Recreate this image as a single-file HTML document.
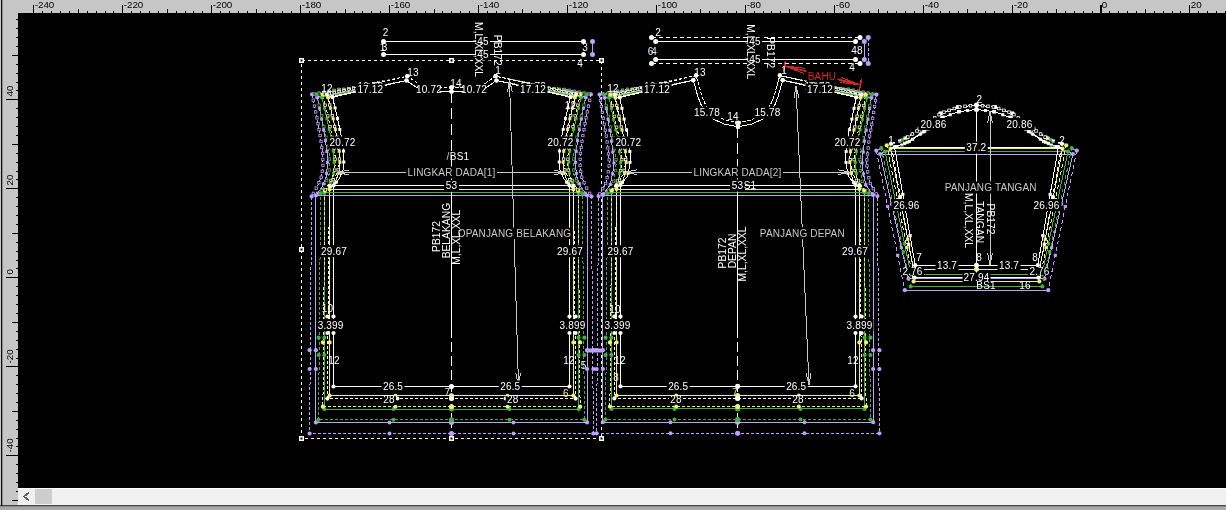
<!DOCTYPE html>
<html><head><meta charset="utf-8"><style>
html,body{margin:0;padding:0;width:1226px;height:510px;overflow:hidden;background:#c6c6c6}
svg{display:block;will-change:transform} path,line{shape-rendering:crispEdges}
</style></head><body>
<svg width="1226" height="510" viewBox="0 0 1226 510">
<rect x="0" y="0" width="1226" height="510" fill="#c6c6c6"/>
<rect x="18" y="13" width="1208" height="475" fill="#000"/>
<line x1="33.5" y1="5" x2="33.5" y2="13" stroke="#000" stroke-width="1"/>
<text x="34.7" y="4.6" fill="#000" font-size="9.8" text-anchor="start" dominant-baseline="central" font-family="Liberation Sans, sans-serif">-240</text>
<line x1="42.5" y1="10.5" x2="42.5" y2="13" stroke="#000" stroke-width="1"/>
<line x1="51.5" y1="10.5" x2="51.5" y2="13" stroke="#000" stroke-width="1"/>
<line x1="60.5" y1="10.5" x2="60.5" y2="13" stroke="#000" stroke-width="1"/>
<line x1="69.5" y1="10.5" x2="69.5" y2="13" stroke="#000" stroke-width="1"/>
<line x1="78.5" y1="8.5" x2="78.5" y2="13" stroke="#000" stroke-width="1"/>
<line x1="87.5" y1="10.5" x2="87.5" y2="13" stroke="#000" stroke-width="1"/>
<line x1="96.5" y1="10.5" x2="96.5" y2="13" stroke="#000" stroke-width="1"/>
<line x1="105.5" y1="10.5" x2="105.5" y2="13" stroke="#000" stroke-width="1"/>
<line x1="113.5" y1="10.5" x2="113.5" y2="13" stroke="#000" stroke-width="1"/>
<line x1="122.5" y1="5" x2="122.5" y2="13" stroke="#000" stroke-width="1"/>
<text x="123.7" y="4.6" fill="#000" font-size="9.8" text-anchor="start" dominant-baseline="central" font-family="Liberation Sans, sans-serif">-220</text>
<line x1="131.5" y1="10.5" x2="131.5" y2="13" stroke="#000" stroke-width="1"/>
<line x1="140.5" y1="10.5" x2="140.5" y2="13" stroke="#000" stroke-width="1"/>
<line x1="149.5" y1="10.5" x2="149.5" y2="13" stroke="#000" stroke-width="1"/>
<line x1="158.5" y1="10.5" x2="158.5" y2="13" stroke="#000" stroke-width="1"/>
<line x1="167.5" y1="8.5" x2="167.5" y2="13" stroke="#000" stroke-width="1"/>
<line x1="176.5" y1="10.5" x2="176.5" y2="13" stroke="#000" stroke-width="1"/>
<line x1="185.5" y1="10.5" x2="185.5" y2="13" stroke="#000" stroke-width="1"/>
<line x1="193.5" y1="10.5" x2="193.5" y2="13" stroke="#000" stroke-width="1"/>
<line x1="202.5" y1="10.5" x2="202.5" y2="13" stroke="#000" stroke-width="1"/>
<line x1="211.5" y1="5" x2="211.5" y2="13" stroke="#000" stroke-width="1"/>
<text x="212.7" y="4.6" fill="#000" font-size="9.8" text-anchor="start" dominant-baseline="central" font-family="Liberation Sans, sans-serif">-200</text>
<line x1="220.5" y1="10.5" x2="220.5" y2="13" stroke="#000" stroke-width="1"/>
<line x1="229.5" y1="10.5" x2="229.5" y2="13" stroke="#000" stroke-width="1"/>
<line x1="238.5" y1="10.5" x2="238.5" y2="13" stroke="#000" stroke-width="1"/>
<line x1="247.5" y1="10.5" x2="247.5" y2="13" stroke="#000" stroke-width="1"/>
<line x1="256.5" y1="8.5" x2="256.5" y2="13" stroke="#000" stroke-width="1"/>
<line x1="265.5" y1="10.5" x2="265.5" y2="13" stroke="#000" stroke-width="1"/>
<line x1="273.5" y1="10.5" x2="273.5" y2="13" stroke="#000" stroke-width="1"/>
<line x1="282.5" y1="10.5" x2="282.5" y2="13" stroke="#000" stroke-width="1"/>
<line x1="291.5" y1="10.5" x2="291.5" y2="13" stroke="#000" stroke-width="1"/>
<line x1="300.5" y1="5" x2="300.5" y2="13" stroke="#000" stroke-width="1"/>
<text x="301.7" y="4.6" fill="#000" font-size="9.8" text-anchor="start" dominant-baseline="central" font-family="Liberation Sans, sans-serif">-180</text>
<line x1="309.5" y1="10.5" x2="309.5" y2="13" stroke="#000" stroke-width="1"/>
<line x1="318.5" y1="10.5" x2="318.5" y2="13" stroke="#000" stroke-width="1"/>
<line x1="327.5" y1="10.5" x2="327.5" y2="13" stroke="#000" stroke-width="1"/>
<line x1="336.5" y1="10.5" x2="336.5" y2="13" stroke="#000" stroke-width="1"/>
<line x1="345.5" y1="8.5" x2="345.5" y2="13" stroke="#000" stroke-width="1"/>
<line x1="354.5" y1="10.5" x2="354.5" y2="13" stroke="#000" stroke-width="1"/>
<line x1="362.5" y1="10.5" x2="362.5" y2="13" stroke="#000" stroke-width="1"/>
<line x1="371.5" y1="10.5" x2="371.5" y2="13" stroke="#000" stroke-width="1"/>
<line x1="380.5" y1="10.5" x2="380.5" y2="13" stroke="#000" stroke-width="1"/>
<line x1="389.5" y1="5" x2="389.5" y2="13" stroke="#000" stroke-width="1"/>
<text x="390.7" y="4.6" fill="#000" font-size="9.8" text-anchor="start" dominant-baseline="central" font-family="Liberation Sans, sans-serif">-160</text>
<line x1="398.5" y1="10.5" x2="398.5" y2="13" stroke="#000" stroke-width="1"/>
<line x1="407.5" y1="10.5" x2="407.5" y2="13" stroke="#000" stroke-width="1"/>
<line x1="416.5" y1="10.5" x2="416.5" y2="13" stroke="#000" stroke-width="1"/>
<line x1="425.5" y1="10.5" x2="425.5" y2="13" stroke="#000" stroke-width="1"/>
<line x1="434.5" y1="8.5" x2="434.5" y2="13" stroke="#000" stroke-width="1"/>
<line x1="442.5" y1="10.5" x2="442.5" y2="13" stroke="#000" stroke-width="1"/>
<line x1="451.5" y1="10.5" x2="451.5" y2="13" stroke="#000" stroke-width="1"/>
<line x1="460.5" y1="10.5" x2="460.5" y2="13" stroke="#000" stroke-width="1"/>
<line x1="469.5" y1="10.5" x2="469.5" y2="13" stroke="#000" stroke-width="1"/>
<line x1="478.5" y1="5" x2="478.5" y2="13" stroke="#000" stroke-width="1"/>
<text x="479.7" y="4.6" fill="#000" font-size="9.8" text-anchor="start" dominant-baseline="central" font-family="Liberation Sans, sans-serif">-140</text>
<line x1="487.5" y1="10.5" x2="487.5" y2="13" stroke="#000" stroke-width="1"/>
<line x1="496.5" y1="10.5" x2="496.5" y2="13" stroke="#000" stroke-width="1"/>
<line x1="505.5" y1="10.5" x2="505.5" y2="13" stroke="#000" stroke-width="1"/>
<line x1="514.5" y1="10.5" x2="514.5" y2="13" stroke="#000" stroke-width="1"/>
<line x1="522.5" y1="8.5" x2="522.5" y2="13" stroke="#000" stroke-width="1"/>
<line x1="531.5" y1="10.5" x2="531.5" y2="13" stroke="#000" stroke-width="1"/>
<line x1="540.5" y1="10.5" x2="540.5" y2="13" stroke="#000" stroke-width="1"/>
<line x1="549.5" y1="10.5" x2="549.5" y2="13" stroke="#000" stroke-width="1"/>
<line x1="558.5" y1="10.5" x2="558.5" y2="13" stroke="#000" stroke-width="1"/>
<line x1="567.5" y1="5" x2="567.5" y2="13" stroke="#000" stroke-width="1"/>
<text x="568.7" y="4.6" fill="#000" font-size="9.8" text-anchor="start" dominant-baseline="central" font-family="Liberation Sans, sans-serif">-120</text>
<line x1="576.5" y1="10.5" x2="576.5" y2="13" stroke="#000" stroke-width="1"/>
<line x1="585.5" y1="10.5" x2="585.5" y2="13" stroke="#000" stroke-width="1"/>
<line x1="594.5" y1="10.5" x2="594.5" y2="13" stroke="#000" stroke-width="1"/>
<line x1="602.5" y1="10.5" x2="602.5" y2="13" stroke="#000" stroke-width="1"/>
<line x1="611.5" y1="8.5" x2="611.5" y2="13" stroke="#000" stroke-width="1"/>
<line x1="620.5" y1="10.5" x2="620.5" y2="13" stroke="#000" stroke-width="1"/>
<line x1="629.5" y1="10.5" x2="629.5" y2="13" stroke="#000" stroke-width="1"/>
<line x1="638.5" y1="10.5" x2="638.5" y2="13" stroke="#000" stroke-width="1"/>
<line x1="647.5" y1="10.5" x2="647.5" y2="13" stroke="#000" stroke-width="1"/>
<line x1="656.5" y1="5" x2="656.5" y2="13" stroke="#000" stroke-width="1"/>
<text x="657.7" y="4.6" fill="#000" font-size="9.8" text-anchor="start" dominant-baseline="central" font-family="Liberation Sans, sans-serif">-100</text>
<line x1="665.5" y1="10.5" x2="665.5" y2="13" stroke="#000" stroke-width="1"/>
<line x1="674.5" y1="10.5" x2="674.5" y2="13" stroke="#000" stroke-width="1"/>
<line x1="683.5" y1="10.5" x2="683.5" y2="13" stroke="#000" stroke-width="1"/>
<line x1="691.5" y1="10.5" x2="691.5" y2="13" stroke="#000" stroke-width="1"/>
<line x1="700.5" y1="8.5" x2="700.5" y2="13" stroke="#000" stroke-width="1"/>
<line x1="709.5" y1="10.5" x2="709.5" y2="13" stroke="#000" stroke-width="1"/>
<line x1="718.5" y1="10.5" x2="718.5" y2="13" stroke="#000" stroke-width="1"/>
<line x1="727.5" y1="10.5" x2="727.5" y2="13" stroke="#000" stroke-width="1"/>
<line x1="736.5" y1="10.5" x2="736.5" y2="13" stroke="#000" stroke-width="1"/>
<line x1="745.5" y1="5" x2="745.5" y2="13" stroke="#000" stroke-width="1"/>
<text x="746.7" y="4.6" fill="#000" font-size="9.8" text-anchor="start" dominant-baseline="central" font-family="Liberation Sans, sans-serif">-80</text>
<line x1="754.5" y1="10.5" x2="754.5" y2="13" stroke="#000" stroke-width="1"/>
<line x1="763.5" y1="10.5" x2="763.5" y2="13" stroke="#000" stroke-width="1"/>
<line x1="771.5" y1="10.5" x2="771.5" y2="13" stroke="#000" stroke-width="1"/>
<line x1="780.5" y1="10.5" x2="780.5" y2="13" stroke="#000" stroke-width="1"/>
<line x1="789.5" y1="8.5" x2="789.5" y2="13" stroke="#000" stroke-width="1"/>
<line x1="798.5" y1="10.5" x2="798.5" y2="13" stroke="#000" stroke-width="1"/>
<line x1="807.5" y1="10.5" x2="807.5" y2="13" stroke="#000" stroke-width="1"/>
<line x1="816.5" y1="10.5" x2="816.5" y2="13" stroke="#000" stroke-width="1"/>
<line x1="825.5" y1="10.5" x2="825.5" y2="13" stroke="#000" stroke-width="1"/>
<line x1="834.5" y1="5" x2="834.5" y2="13" stroke="#000" stroke-width="1"/>
<text x="835.7" y="4.6" fill="#000" font-size="9.8" text-anchor="start" dominant-baseline="central" font-family="Liberation Sans, sans-serif">-60</text>
<line x1="843.5" y1="10.5" x2="843.5" y2="13" stroke="#000" stroke-width="1"/>
<line x1="851.5" y1="10.5" x2="851.5" y2="13" stroke="#000" stroke-width="1"/>
<line x1="860.5" y1="10.5" x2="860.5" y2="13" stroke="#000" stroke-width="1"/>
<line x1="869.5" y1="10.5" x2="869.5" y2="13" stroke="#000" stroke-width="1"/>
<line x1="878.5" y1="8.5" x2="878.5" y2="13" stroke="#000" stroke-width="1"/>
<line x1="887.5" y1="10.5" x2="887.5" y2="13" stroke="#000" stroke-width="1"/>
<line x1="896.5" y1="10.5" x2="896.5" y2="13" stroke="#000" stroke-width="1"/>
<line x1="905.5" y1="10.5" x2="905.5" y2="13" stroke="#000" stroke-width="1"/>
<line x1="914.5" y1="10.5" x2="914.5" y2="13" stroke="#000" stroke-width="1"/>
<line x1="923.5" y1="5" x2="923.5" y2="13" stroke="#000" stroke-width="1"/>
<text x="924.7" y="4.6" fill="#000" font-size="9.8" text-anchor="start" dominant-baseline="central" font-family="Liberation Sans, sans-serif">-40</text>
<line x1="931.5" y1="10.5" x2="931.5" y2="13" stroke="#000" stroke-width="1"/>
<line x1="940.5" y1="10.5" x2="940.5" y2="13" stroke="#000" stroke-width="1"/>
<line x1="949.5" y1="10.5" x2="949.5" y2="13" stroke="#000" stroke-width="1"/>
<line x1="958.5" y1="10.5" x2="958.5" y2="13" stroke="#000" stroke-width="1"/>
<line x1="967.5" y1="8.5" x2="967.5" y2="13" stroke="#000" stroke-width="1"/>
<line x1="976.5" y1="10.5" x2="976.5" y2="13" stroke="#000" stroke-width="1"/>
<line x1="985.5" y1="10.5" x2="985.5" y2="13" stroke="#000" stroke-width="1"/>
<line x1="994.5" y1="10.5" x2="994.5" y2="13" stroke="#000" stroke-width="1"/>
<line x1="1003.5" y1="10.5" x2="1003.5" y2="13" stroke="#000" stroke-width="1"/>
<line x1="1012.5" y1="5" x2="1012.5" y2="13" stroke="#000" stroke-width="1"/>
<text x="1013.7" y="4.6" fill="#000" font-size="9.8" text-anchor="start" dominant-baseline="central" font-family="Liberation Sans, sans-serif">-20</text>
<line x1="1020.5" y1="10.5" x2="1020.5" y2="13" stroke="#000" stroke-width="1"/>
<line x1="1029.5" y1="10.5" x2="1029.5" y2="13" stroke="#000" stroke-width="1"/>
<line x1="1038.5" y1="10.5" x2="1038.5" y2="13" stroke="#000" stroke-width="1"/>
<line x1="1047.5" y1="10.5" x2="1047.5" y2="13" stroke="#000" stroke-width="1"/>
<line x1="1056.5" y1="8.5" x2="1056.5" y2="13" stroke="#000" stroke-width="1"/>
<line x1="1065.5" y1="10.5" x2="1065.5" y2="13" stroke="#000" stroke-width="1"/>
<line x1="1074.5" y1="10.5" x2="1074.5" y2="13" stroke="#000" stroke-width="1"/>
<line x1="1083.5" y1="10.5" x2="1083.5" y2="13" stroke="#000" stroke-width="1"/>
<line x1="1092.5" y1="10.5" x2="1092.5" y2="13" stroke="#000" stroke-width="1"/>
<line x1="1100.5" y1="5" x2="1100.5" y2="13" stroke="#000" stroke-width="1"/>
<text x="1101.7" y="4.6" fill="#000" font-size="9.8" text-anchor="start" dominant-baseline="central" font-family="Liberation Sans, sans-serif">0</text>
<line x1="1101.5" y1="5" x2="1101.5" y2="13" stroke="#000" stroke-width="1"/>
<line x1="1109.5" y1="10.5" x2="1109.5" y2="13" stroke="#000" stroke-width="1"/>
<line x1="1118.5" y1="10.5" x2="1118.5" y2="13" stroke="#000" stroke-width="1"/>
<line x1="1127.5" y1="10.5" x2="1127.5" y2="13" stroke="#000" stroke-width="1"/>
<line x1="1136.5" y1="10.5" x2="1136.5" y2="13" stroke="#000" stroke-width="1"/>
<line x1="1145.5" y1="8.5" x2="1145.5" y2="13" stroke="#000" stroke-width="1"/>
<line x1="1154.5" y1="10.5" x2="1154.5" y2="13" stroke="#000" stroke-width="1"/>
<line x1="1163.5" y1="10.5" x2="1163.5" y2="13" stroke="#000" stroke-width="1"/>
<line x1="1172.5" y1="10.5" x2="1172.5" y2="13" stroke="#000" stroke-width="1"/>
<line x1="1180.5" y1="10.5" x2="1180.5" y2="13" stroke="#000" stroke-width="1"/>
<line x1="1189.5" y1="5" x2="1189.5" y2="13" stroke="#000" stroke-width="1"/>
<text x="1190.7" y="4.6" fill="#000" font-size="9.8" text-anchor="start" dominant-baseline="central" font-family="Liberation Sans, sans-serif">20</text>
<line x1="1198.5" y1="10.5" x2="1198.5" y2="13" stroke="#000" stroke-width="1"/>
<line x1="1207.5" y1="10.5" x2="1207.5" y2="13" stroke="#000" stroke-width="1"/>
<line x1="1216.5" y1="10.5" x2="1216.5" y2="13" stroke="#000" stroke-width="1"/>
<line x1="1225.5" y1="10.5" x2="1225.5" y2="13" stroke="#000" stroke-width="1"/>
<line x1="12" y1="500.5" x2="18" y2="500.5" stroke="#000" stroke-width="1"/>
<line x1="15.5" y1="491.5" x2="18" y2="491.5" stroke="#000" stroke-width="1"/>
<line x1="15.5" y1="482.5" x2="18" y2="482.5" stroke="#000" stroke-width="1"/>
<line x1="15.5" y1="473.5" x2="18" y2="473.5" stroke="#000" stroke-width="1"/>
<line x1="15.5" y1="464.5" x2="18" y2="464.5" stroke="#000" stroke-width="1"/>
<line x1="6" y1="455.5" x2="18" y2="455.5" stroke="#000" stroke-width="1"/>
<text x="12.8" y="452.5" fill="#000" font-size="9.8" text-anchor="start" font-family="Liberation Sans, sans-serif" transform="rotate(-90 12.8 452.5)">-40</text>
<line x1="15.5" y1="446.5" x2="18" y2="446.5" stroke="#000" stroke-width="1"/>
<line x1="15.5" y1="438.5" x2="18" y2="438.5" stroke="#000" stroke-width="1"/>
<line x1="15.5" y1="429.5" x2="18" y2="429.5" stroke="#000" stroke-width="1"/>
<line x1="15.5" y1="420.5" x2="18" y2="420.5" stroke="#000" stroke-width="1"/>
<line x1="12" y1="411.5" x2="18" y2="411.5" stroke="#000" stroke-width="1"/>
<line x1="15.5" y1="402.5" x2="18" y2="402.5" stroke="#000" stroke-width="1"/>
<line x1="15.5" y1="393.5" x2="18" y2="393.5" stroke="#000" stroke-width="1"/>
<line x1="15.5" y1="384.5" x2="18" y2="384.5" stroke="#000" stroke-width="1"/>
<line x1="15.5" y1="375.5" x2="18" y2="375.5" stroke="#000" stroke-width="1"/>
<line x1="6" y1="366.5" x2="18" y2="366.5" stroke="#000" stroke-width="1"/>
<text x="12.8" y="363.5" fill="#000" font-size="9.8" text-anchor="start" font-family="Liberation Sans, sans-serif" transform="rotate(-90 12.8 363.5)">-20</text>
<line x1="15.5" y1="358.5" x2="18" y2="358.5" stroke="#000" stroke-width="1"/>
<line x1="15.5" y1="349.5" x2="18" y2="349.5" stroke="#000" stroke-width="1"/>
<line x1="15.5" y1="340.5" x2="18" y2="340.5" stroke="#000" stroke-width="1"/>
<line x1="15.5" y1="331.5" x2="18" y2="331.5" stroke="#000" stroke-width="1"/>
<line x1="12" y1="322.5" x2="18" y2="322.5" stroke="#000" stroke-width="1"/>
<line x1="15.5" y1="313.5" x2="18" y2="313.5" stroke="#000" stroke-width="1"/>
<line x1="15.5" y1="304.5" x2="18" y2="304.5" stroke="#000" stroke-width="1"/>
<line x1="15.5" y1="295.5" x2="18" y2="295.5" stroke="#000" stroke-width="1"/>
<line x1="15.5" y1="286.5" x2="18" y2="286.5" stroke="#000" stroke-width="1"/>
<line x1="6" y1="277.5" x2="18" y2="277.5" stroke="#000" stroke-width="1"/>
<text x="12.8" y="274.5" fill="#000" font-size="9.8" text-anchor="start" font-family="Liberation Sans, sans-serif" transform="rotate(-90 12.8 274.5)">0</text>
<line x1="15.5" y1="268.5" x2="18" y2="268.5" stroke="#000" stroke-width="1"/>
<line x1="15.5" y1="260.5" x2="18" y2="260.5" stroke="#000" stroke-width="1"/>
<line x1="15.5" y1="251.5" x2="18" y2="251.5" stroke="#000" stroke-width="1"/>
<line x1="15.5" y1="242.5" x2="18" y2="242.5" stroke="#000" stroke-width="1"/>
<line x1="12" y1="233.5" x2="18" y2="233.5" stroke="#000" stroke-width="1"/>
<line x1="15.5" y1="224.5" x2="18" y2="224.5" stroke="#000" stroke-width="1"/>
<line x1="15.5" y1="215.5" x2="18" y2="215.5" stroke="#000" stroke-width="1"/>
<line x1="15.5" y1="206.5" x2="18" y2="206.5" stroke="#000" stroke-width="1"/>
<line x1="15.5" y1="197.5" x2="18" y2="197.5" stroke="#000" stroke-width="1"/>
<line x1="6" y1="188.5" x2="18" y2="188.5" stroke="#000" stroke-width="1"/>
<text x="12.8" y="185.5" fill="#000" font-size="9.8" text-anchor="start" font-family="Liberation Sans, sans-serif" transform="rotate(-90 12.8 185.5)">20</text>
<line x1="15.5" y1="179.5" x2="18" y2="179.5" stroke="#000" stroke-width="1"/>
<line x1="15.5" y1="171.5" x2="18" y2="171.5" stroke="#000" stroke-width="1"/>
<line x1="15.5" y1="162.5" x2="18" y2="162.5" stroke="#000" stroke-width="1"/>
<line x1="15.5" y1="153.5" x2="18" y2="153.5" stroke="#000" stroke-width="1"/>
<line x1="12" y1="144.5" x2="18" y2="144.5" stroke="#000" stroke-width="1"/>
<line x1="15.5" y1="135.5" x2="18" y2="135.5" stroke="#000" stroke-width="1"/>
<line x1="15.5" y1="126.5" x2="18" y2="126.5" stroke="#000" stroke-width="1"/>
<line x1="15.5" y1="117.5" x2="18" y2="117.5" stroke="#000" stroke-width="1"/>
<line x1="15.5" y1="108.5" x2="18" y2="108.5" stroke="#000" stroke-width="1"/>
<line x1="6" y1="99.5" x2="18" y2="99.5" stroke="#000" stroke-width="1"/>
<text x="12.8" y="96.5" fill="#000" font-size="9.8" text-anchor="start" font-family="Liberation Sans, sans-serif" transform="rotate(-90 12.8 96.5)">40</text>
<line x1="15.5" y1="90.5" x2="18" y2="90.5" stroke="#000" stroke-width="1"/>
<line x1="15.5" y1="82.5" x2="18" y2="82.5" stroke="#000" stroke-width="1"/>
<line x1="15.5" y1="73.5" x2="18" y2="73.5" stroke="#000" stroke-width="1"/>
<line x1="15.5" y1="64.5" x2="18" y2="64.5" stroke="#000" stroke-width="1"/>
<line x1="12" y1="55.5" x2="18" y2="55.5" stroke="#000" stroke-width="1"/>
<line x1="15.5" y1="46.5" x2="18" y2="46.5" stroke="#000" stroke-width="1"/>
<line x1="15.5" y1="37.5" x2="18" y2="37.5" stroke="#000" stroke-width="1"/>
<line x1="15.5" y1="28.5" x2="18" y2="28.5" stroke="#000" stroke-width="1"/>
<line x1="15.5" y1="19.5" x2="18" y2="19.5" stroke="#000" stroke-width="1"/>
<rect x="1" y="0" width="1.3" height="506" fill="#101010"/>
<rect x="18" y="488" width="1208" height="17" fill="#f0f0f0"/>
<rect x="35" y="489" width="17" height="15" fill="#cdcdcd"/>
<path d="M29 492.5 L24 496.5 L29 500.5" fill="none" stroke="#606060" stroke-width="1.8"/>
<rect x="18" y="488" width="1208" height="1" fill="#ffffff"/>
<rect x="0" y="505.3" width="1226" height="1.2" fill="#101010"/>
<rect x="0" y="506.5" width="1226" height="3.5" fill="#a8a8a8"/>
<g clip-path="url(#cv)">
<clipPath id="cv"><rect x="18" y="13" width="1208" height="475"/></clipPath>
<g>
<path d="M301.5 60.5 L601.5 60.5 L601.5 438.5 L301.5 438.5Z" fill="none" stroke="#ffffff" stroke-width="1" stroke-dasharray="3 3"/>
<rect x="299" y="58" width="5" height="5" fill="#fff"/>
<rect x="300.5" y="59.5" width="2" height="2" fill="#000"/>
<rect x="599" y="58" width="5" height="5" fill="#fff"/>
<rect x="600.5" y="59.5" width="2" height="2" fill="#000"/>
<rect x="299" y="436" width="5" height="5" fill="#fff"/>
<rect x="300.5" y="437.5" width="2" height="2" fill="#000"/>
<rect x="599" y="436" width="5" height="5" fill="#fff"/>
<rect x="600.5" y="437.5" width="2" height="2" fill="#000"/>
<rect x="449" y="436" width="5" height="5" fill="#fff"/>
<rect x="450.5" y="437.5" width="2" height="2" fill="#000"/>
<rect x="299" y="247" width="5" height="5" fill="#fff"/>
<rect x="300.5" y="248.5" width="2" height="2" fill="#000"/>
<rect x="449" y="58" width="5" height="5" fill="#fff"/>
<rect x="450.5" y="59.5" width="2" height="2" fill="#000"/>
<path d="M451.5 87.5 L441.09 87.5 L426.74 86.83 L418.81 84.19 L407.4 76.26 L312.07 94.32 L317.04 118.45 L320.67 138.69 L322.78 154.73 L322.92 165.57 L321.69 176.05 L317.8 185.36 L311.6 196.45 L309.6 433.5 L451.5 433.5 L593.4 433.5 L591.4 196.45 L585.2 185.36 L581.31 176.05 L580.08 165.57 L580.22 154.73 L582.33 138.69 L585.96 118.45 L590.93 94.32 L495.6 76.26 L484.19 84.19 L476.26 86.83 L461.91 87.5 L451.5 87.5" fill="none" stroke="#c0a0ff" stroke-width="1" stroke-dasharray="3 2"/>
<path d="M451.5 91.5 L441 91.5 L426 90.8 L417 87.8 L406.5 80.5 L317.3 97.4 L321.46 117.6 L325.11 138 L327.27 154.4 L327.43 165.8 L326.09 177.2 L321.74 187.6 L315.9 195.5 L315.9 422.4 L451.5 422.4 L587.1 422.4 L587.1 195.5 L581.26 187.6 L576.91 177.2 L575.57 165.8 L575.73 154.4 L577.89 138 L581.54 117.6 L585.7 97.4 L496.5 80.5 L486 87.8 L477 90.8 L462 91.5 L451.5 91.5" fill="none" stroke="#c0a0ff" stroke-width="1"/>
<path d="M451.5 87.5 L441.09 87.5 L426.74 86.83 L418.81 84.19 L407.39 76.24 L316.56 94.39 L322.22 118.21 L326.41 138.1 L329.07 153.81 L329.75 164.3 L329.03 174.37 L325.68 183.25 L320.6 193.33 L318.6 419.8 L451.5 419.8 L584.4 419.8 L582.4 193.33 L577.32 183.25 L573.97 174.37 L573.25 164.3 L573.93 153.81 L576.59 138.1 L580.78 118.21 L586.44 94.39 L495.61 76.24 L484.19 84.19 L476.26 86.83 L461.91 87.5 L451.5 87.5" fill="none" stroke="#40b040" stroke-width="1" stroke-dasharray="3 2"/>
<path d="M451.5 91.5 L441 91.5 L426 90.8 L417 87.8 L406.5 80.5 L321.9 97.4 L326.61 117.23 L330.83 137.26 L333.54 153.29 L334.26 164.31 L333.47 175.34 L329.69 185.37 L324.4 192.9 L324.4 409.1 L451.5 409.1 L578.6 409.1 L578.6 192.9 L573.31 185.37 L569.53 175.34 L568.74 164.31 L569.46 153.29 L572.17 137.26 L576.39 117.23 L581.1 97.4 L496.5 80.5 L486 87.8 L477 90.8 L462 91.5 L451.5 91.5" fill="none" stroke="#40b040" stroke-width="1"/>
<path d="M451.5 87.5 L441.09 87.5 L426.74 86.83 L418.81 84.19 L407.36 76.22 L322.78 94.46 L328.28 117.71 L332.32 137.08 L334.83 152.28 L335.37 162.24 L334.53 171.76 L331.1 180.1 L324.9 190.71 L322.9 406.7 L451.5 406.7 L580.1 406.7 L578.1 190.71 L571.9 180.1 L568.47 171.76 L567.63 162.24 L568.17 152.28 L570.68 137.08 L574.72 117.71 L580.22 94.46 L495.64 76.22 L484.19 84.19 L476.26 86.83 L461.91 87.5 L451.5 87.5" fill="none" stroke="#f0f070" stroke-width="1" stroke-dasharray="3 2"/>
<path d="M451.5 91.5 L441 91.5 L426 90.8 L417 87.8 L406.5 80.5 L328.1 97.4 L332.67 116.73 L336.74 136.26 L339.31 151.79 L339.89 162.31 L338.96 172.84 L335.03 182.37 L329.6 189.4 L329.6 395.7 L451.5 395.7 L573.4 395.7 L573.4 189.4 L567.97 182.37 L564.04 172.84 L563.11 162.31 L563.69 151.79 L566.26 136.26 L570.33 116.73 L574.9 97.4 L496.5 80.5 L486 87.8 L477 90.8 L462 91.5 L451.5 91.5" fill="none" stroke="#f0f070" stroke-width="1"/>
<path d="M451.5 87.5 L441.09 87.5 L426.74 86.83 L418.81 84.19 L407.34 76.21 L327.18 94.3 L332.61 116.99 L336.58 135.83 L339.02 150.48 L339.49 159.89 L338.59 168.83 L335.15 176.58 L329.4 185.74 L327.4 398.6 L451.5 398.6 L575.6 398.6 L573.6 185.74 L567.85 176.58 L564.41 168.83 L563.51 159.89 L563.98 150.48 L566.42 135.83 L570.39 116.99 L575.82 94.3 L495.66 76.21 L484.19 84.19 L476.26 86.83 L461.91 87.5 L451.5 87.5" fill="none" stroke="#ffffff" stroke-width="1" stroke-dasharray="3 2"/>
<path d="M451.5 91.5 L441 91.5 L426 90.8 L417 87.8 L406.5 80.5 L332.5 97.2 L337 116 L341 135 L343.5 150 L344 160 L343 170 L339 179 L333.5 185.5 L333.5 386.5 L451.5 386.5 L569.5 386.5 L569.5 185.5 L564 179 L560 170 L559 160 L559.5 150 L562 135 L566 116 L570.5 97.2 L496.5 80.5 L486 87.8 L477 90.8 L462 91.5 L451.5 91.5" fill="none" stroke="#ffffff" stroke-width="1"/>
<line x1="333.5" y1="185.5" x2="569.5" y2="185.5" stroke="#ffffff" stroke-width="1"/>
<line x1="329.6" y1="189.4" x2="573.4" y2="189.4" stroke="#f0f070" stroke-width="1"/>
<line x1="324.4" y1="192.9" x2="578.6" y2="192.9" stroke="#40b040" stroke-width="1"/>
<line x1="315.9" y1="195.5" x2="587.1" y2="195.5" stroke="#c0a0ff" stroke-width="1"/>
<line x1="451.5" y1="91.5" x2="451.5" y2="180" stroke="#ffffff" stroke-width="1" stroke-dasharray="11 5"/>
<line x1="451.5" y1="180" x2="451.5" y2="328" stroke="#ffffff" stroke-width="1"/>
<line x1="451.5" y1="328" x2="451.5" y2="386" stroke="#ffffff" stroke-width="1" stroke-dasharray="10 4"/>
<line x1="451.5" y1="386" x2="451.5" y2="434" stroke="#ffffff" stroke-width="1" stroke-dasharray="6 3"/>
<circle cx="451.5" cy="91.5" r="2.1" fill="#c0a0ff"/>
<circle cx="451.5" cy="91.5" r="2.1" fill="#c0a0ff"/>
<circle cx="451.5" cy="87.5" r="2.1" fill="#c0a0ff"/>
<circle cx="451.5" cy="87.5" r="2.1" fill="#c0a0ff"/>
<circle cx="406.5" cy="80.5" r="2.1" fill="#c0a0ff"/>
<circle cx="496.5" cy="80.5" r="2.1" fill="#c0a0ff"/>
<circle cx="407.4" cy="76.26" r="2.1" fill="#c0a0ff"/>
<circle cx="495.6" cy="76.26" r="2.1" fill="#c0a0ff"/>
<circle cx="317.3" cy="97.4" r="2.1" fill="#c0a0ff"/>
<circle cx="585.7" cy="97.4" r="2.1" fill="#c0a0ff"/>
<circle cx="312.07" cy="94.32" r="2.1" fill="#c0a0ff"/>
<circle cx="590.93" cy="94.32" r="2.1" fill="#c0a0ff"/>
<circle cx="315.9" cy="195.5" r="2.1" fill="#c0a0ff"/>
<circle cx="587.1" cy="195.5" r="2.1" fill="#c0a0ff"/>
<circle cx="311.6" cy="196.45" r="2.1" fill="#c0a0ff"/>
<circle cx="591.4" cy="196.45" r="2.1" fill="#c0a0ff"/>
<circle cx="315.9" cy="422.4" r="2.1" fill="#c0a0ff"/>
<circle cx="587.1" cy="422.4" r="2.1" fill="#c0a0ff"/>
<circle cx="309.6" cy="433.5" r="2.1" fill="#c0a0ff"/>
<circle cx="593.4" cy="433.5" r="2.1" fill="#c0a0ff"/>
<circle cx="451.5" cy="422.4" r="2.1" fill="#c0a0ff"/>
<circle cx="451.5" cy="422.4" r="2.1" fill="#c0a0ff"/>
<circle cx="451.5" cy="433.5" r="2.1" fill="#c0a0ff"/>
<circle cx="451.5" cy="433.5" r="2.1" fill="#c0a0ff"/>
<rect x="312.08" y="99" width="2.4" height="2.4" fill="#000" stroke="#c0a0ff" stroke-width="0.8"/>
<rect x="588.52" y="99" width="2.4" height="2.4" fill="#000" stroke="#c0a0ff" stroke-width="0.8"/>
<rect x="313.29" y="104.87" width="2.4" height="2.4" fill="#000" stroke="#c0a0ff" stroke-width="0.8"/>
<rect x="587.31" y="104.87" width="2.4" height="2.4" fill="#000" stroke="#c0a0ff" stroke-width="0.8"/>
<rect x="314.5" y="110.75" width="2.4" height="2.4" fill="#000" stroke="#c0a0ff" stroke-width="0.8"/>
<rect x="586.1" y="110.75" width="2.4" height="2.4" fill="#000" stroke="#c0a0ff" stroke-width="0.8"/>
<rect x="315.71" y="116.63" width="2.4" height="2.4" fill="#000" stroke="#c0a0ff" stroke-width="0.8"/>
<rect x="584.89" y="116.63" width="2.4" height="2.4" fill="#000" stroke="#c0a0ff" stroke-width="0.8"/>
<rect x="316.78" y="122.53" width="2.4" height="2.4" fill="#000" stroke="#c0a0ff" stroke-width="0.8"/>
<rect x="583.82" y="122.53" width="2.4" height="2.4" fill="#000" stroke="#c0a0ff" stroke-width="0.8"/>
<rect x="317.84" y="128.44" width="2.4" height="2.4" fill="#000" stroke="#c0a0ff" stroke-width="0.8"/>
<rect x="582.76" y="128.44" width="2.4" height="2.4" fill="#000" stroke="#c0a0ff" stroke-width="0.8"/>
<rect x="318.9" y="134.34" width="2.4" height="2.4" fill="#000" stroke="#c0a0ff" stroke-width="0.8"/>
<rect x="581.7" y="134.34" width="2.4" height="2.4" fill="#000" stroke="#c0a0ff" stroke-width="0.8"/>
<rect x="319.83" y="140.27" width="2.4" height="2.4" fill="#000" stroke="#c0a0ff" stroke-width="0.8"/>
<rect x="580.77" y="140.27" width="2.4" height="2.4" fill="#000" stroke="#c0a0ff" stroke-width="0.8"/>
<rect x="320.61" y="146.22" width="2.4" height="2.4" fill="#000" stroke="#c0a0ff" stroke-width="0.8"/>
<rect x="579.99" y="146.22" width="2.4" height="2.4" fill="#000" stroke="#c0a0ff" stroke-width="0.8"/>
<rect x="321.4" y="152.16" width="2.4" height="2.4" fill="#000" stroke="#c0a0ff" stroke-width="0.8"/>
<rect x="579.2" y="152.16" width="2.4" height="2.4" fill="#000" stroke="#c0a0ff" stroke-width="0.8"/>
<rect x="321.64" y="158.15" width="2.4" height="2.4" fill="#000" stroke="#c0a0ff" stroke-width="0.8"/>
<rect x="578.96" y="158.15" width="2.4" height="2.4" fill="#000" stroke="#c0a0ff" stroke-width="0.8"/>
<rect x="321.72" y="164.15" width="2.4" height="2.4" fill="#000" stroke="#c0a0ff" stroke-width="0.8"/>
<rect x="578.88" y="164.15" width="2.4" height="2.4" fill="#000" stroke="#c0a0ff" stroke-width="0.8"/>
<rect x="321.05" y="170.11" width="2.4" height="2.4" fill="#000" stroke="#c0a0ff" stroke-width="0.8"/>
<rect x="579.55" y="170.11" width="2.4" height="2.4" fill="#000" stroke="#c0a0ff" stroke-width="0.8"/>
<rect x="320.02" y="175.98" width="2.4" height="2.4" fill="#000" stroke="#c0a0ff" stroke-width="0.8"/>
<rect x="580.58" y="175.98" width="2.4" height="2.4" fill="#000" stroke="#c0a0ff" stroke-width="0.8"/>
<rect x="317.7" y="181.52" width="2.4" height="2.4" fill="#000" stroke="#c0a0ff" stroke-width="0.8"/>
<rect x="582.9" y="181.52" width="2.4" height="2.4" fill="#000" stroke="#c0a0ff" stroke-width="0.8"/>
<rect x="315.07" y="186.9" width="2.4" height="2.4" fill="#000" stroke="#c0a0ff" stroke-width="0.8"/>
<rect x="585.53" y="186.9" width="2.4" height="2.4" fill="#000" stroke="#c0a0ff" stroke-width="0.8"/>
<rect x="312.14" y="192.14" width="2.4" height="2.4" fill="#000" stroke="#c0a0ff" stroke-width="0.8"/>
<rect x="588.46" y="192.14" width="2.4" height="2.4" fill="#000" stroke="#c0a0ff" stroke-width="0.8"/>
<rect x="318.42" y="107.07" width="2.2" height="2.2" fill="#c0a0ff" stroke="#c0a0ff" stroke-width="0.8"/>
<rect x="582.38" y="107.07" width="2.2" height="2.2" fill="#c0a0ff" stroke="#c0a0ff" stroke-width="0.8"/>
<rect x="320.6" y="117.86" width="2.2" height="2.2" fill="#c0a0ff" stroke="#c0a0ff" stroke-width="0.8"/>
<rect x="580.2" y="117.86" width="2.2" height="2.2" fill="#c0a0ff" stroke="#c0a0ff" stroke-width="0.8"/>
<rect x="322.54" y="128.68" width="2.2" height="2.2" fill="#c0a0ff" stroke="#c0a0ff" stroke-width="0.8"/>
<rect x="578.26" y="128.68" width="2.2" height="2.2" fill="#c0a0ff" stroke="#c0a0ff" stroke-width="0.8"/>
<rect x="324.36" y="139.53" width="2.2" height="2.2" fill="#c0a0ff" stroke="#c0a0ff" stroke-width="0.8"/>
<rect x="576.44" y="139.53" width="2.2" height="2.2" fill="#c0a0ff" stroke="#c0a0ff" stroke-width="0.8"/>
<rect x="325.79" y="150.43" width="2.2" height="2.2" fill="#c0a0ff" stroke="#c0a0ff" stroke-width="0.8"/>
<rect x="575.01" y="150.43" width="2.2" height="2.2" fill="#c0a0ff" stroke="#c0a0ff" stroke-width="0.8"/>
<rect x="326.28" y="161.41" width="2.2" height="2.2" fill="#c0a0ff" stroke="#c0a0ff" stroke-width="0.8"/>
<rect x="574.52" y="161.41" width="2.2" height="2.2" fill="#c0a0ff" stroke="#c0a0ff" stroke-width="0.8"/>
<rect x="325.43" y="172.36" width="2.2" height="2.2" fill="#c0a0ff" stroke="#c0a0ff" stroke-width="0.8"/>
<rect x="575.37" y="172.36" width="2.2" height="2.2" fill="#c0a0ff" stroke="#c0a0ff" stroke-width="0.8"/>
<rect x="322.2" y="182.77" width="2.2" height="2.2" fill="#c0a0ff" stroke="#c0a0ff" stroke-width="0.8"/>
<rect x="578.6" y="182.77" width="2.2" height="2.2" fill="#c0a0ff" stroke="#c0a0ff" stroke-width="0.8"/>
<rect x="316.5" y="192.1" width="2.2" height="2.2" fill="#c0a0ff" stroke="#c0a0ff" stroke-width="0.8"/>
<rect x="584.3" y="192.1" width="2.2" height="2.2" fill="#c0a0ff" stroke="#c0a0ff" stroke-width="0.8"/>
<rect x="337.53" y="88.19" width="2.2" height="2.2" fill="#000" stroke="#c0a0ff" stroke-width="0.8"/>
<rect x="563.27" y="88.19" width="2.2" height="2.2" fill="#000" stroke="#c0a0ff" stroke-width="0.8"/>
<rect x="332.62" y="89.12" width="2.2" height="2.2" fill="#000" stroke="#c0a0ff" stroke-width="0.8"/>
<rect x="568.18" y="89.12" width="2.2" height="2.2" fill="#000" stroke="#c0a0ff" stroke-width="0.8"/>
<rect x="327.7" y="90.05" width="2.2" height="2.2" fill="#000" stroke="#c0a0ff" stroke-width="0.8"/>
<rect x="573.1" y="90.05" width="2.2" height="2.2" fill="#000" stroke="#c0a0ff" stroke-width="0.8"/>
<rect x="322.79" y="90.98" width="2.2" height="2.2" fill="#000" stroke="#c0a0ff" stroke-width="0.8"/>
<rect x="578.01" y="90.98" width="2.2" height="2.2" fill="#000" stroke="#c0a0ff" stroke-width="0.8"/>
<rect x="317.88" y="91.91" width="2.2" height="2.2" fill="#000" stroke="#c0a0ff" stroke-width="0.8"/>
<rect x="582.92" y="91.91" width="2.2" height="2.2" fill="#000" stroke="#c0a0ff" stroke-width="0.8"/>
<rect x="312.97" y="92.84" width="2.2" height="2.2" fill="#000" stroke="#c0a0ff" stroke-width="0.8"/>
<rect x="587.83" y="92.84" width="2.2" height="2.2" fill="#000" stroke="#c0a0ff" stroke-width="0.8"/>
<circle cx="389.5" cy="422.4" r="2.0" fill="#c0a0ff"/>
<circle cx="513.5" cy="422.4" r="2.0" fill="#c0a0ff"/>
<circle cx="451.5" cy="422.4" r="2.5" fill="#c0a0ff"/>
<circle cx="389.5" cy="433.5" r="2.0" fill="#c0a0ff"/>
<circle cx="513.5" cy="433.5" r="2.0" fill="#c0a0ff"/>
<circle cx="451.5" cy="433.5" r="2.5" fill="#c0a0ff"/>
<circle cx="451.5" cy="91.5" r="2.1" fill="#40b040"/>
<circle cx="451.5" cy="91.5" r="2.1" fill="#40b040"/>
<circle cx="451.5" cy="87.5" r="2.1" fill="#40b040"/>
<circle cx="451.5" cy="87.5" r="2.1" fill="#40b040"/>
<circle cx="406.5" cy="80.5" r="2.1" fill="#40b040"/>
<circle cx="496.5" cy="80.5" r="2.1" fill="#40b040"/>
<circle cx="407.39" cy="76.24" r="2.1" fill="#40b040"/>
<circle cx="495.61" cy="76.24" r="2.1" fill="#40b040"/>
<circle cx="321.9" cy="97.4" r="2.1" fill="#40b040"/>
<circle cx="581.1" cy="97.4" r="2.1" fill="#40b040"/>
<circle cx="316.56" cy="94.39" r="2.1" fill="#40b040"/>
<circle cx="586.44" cy="94.39" r="2.1" fill="#40b040"/>
<circle cx="324.4" cy="192.9" r="2.1" fill="#40b040"/>
<circle cx="578.6" cy="192.9" r="2.1" fill="#40b040"/>
<circle cx="320.6" cy="193.33" r="2.1" fill="#40b040"/>
<circle cx="582.4" cy="193.33" r="2.1" fill="#40b040"/>
<circle cx="324.4" cy="409.1" r="2.1" fill="#40b040"/>
<circle cx="578.6" cy="409.1" r="2.1" fill="#40b040"/>
<circle cx="318.6" cy="419.8" r="2.1" fill="#40b040"/>
<circle cx="584.4" cy="419.8" r="2.1" fill="#40b040"/>
<circle cx="451.5" cy="409.1" r="2.1" fill="#40b040"/>
<circle cx="451.5" cy="409.1" r="2.1" fill="#40b040"/>
<circle cx="451.5" cy="419.8" r="2.1" fill="#40b040"/>
<circle cx="451.5" cy="419.8" r="2.1" fill="#40b040"/>
<rect x="317.9" y="103.89" width="2.4" height="2.4" fill="#000" stroke="#40b040" stroke-width="0.8"/>
<rect x="582.7" y="103.89" width="2.4" height="2.4" fill="#000" stroke="#40b040" stroke-width="0.8"/>
<rect x="320.45" y="114.59" width="2.4" height="2.4" fill="#000" stroke="#40b040" stroke-width="0.8"/>
<rect x="580.15" y="114.59" width="2.4" height="2.4" fill="#000" stroke="#40b040" stroke-width="0.8"/>
<rect x="322.78" y="125.34" width="2.4" height="2.4" fill="#000" stroke="#40b040" stroke-width="0.8"/>
<rect x="577.82" y="125.34" width="2.4" height="2.4" fill="#000" stroke="#40b040" stroke-width="0.8"/>
<rect x="325.04" y="136.11" width="2.4" height="2.4" fill="#000" stroke="#40b040" stroke-width="0.8"/>
<rect x="575.56" y="136.11" width="2.4" height="2.4" fill="#000" stroke="#40b040" stroke-width="0.8"/>
<rect x="326.91" y="146.95" width="2.4" height="2.4" fill="#000" stroke="#40b040" stroke-width="0.8"/>
<rect x="573.69" y="146.95" width="2.4" height="2.4" fill="#000" stroke="#40b040" stroke-width="0.8"/>
<rect x="328.21" y="157.85" width="2.4" height="2.4" fill="#000" stroke="#40b040" stroke-width="0.8"/>
<rect x="572.39" y="157.85" width="2.4" height="2.4" fill="#000" stroke="#40b040" stroke-width="0.8"/>
<rect x="328.14" y="168.83" width="2.4" height="2.4" fill="#000" stroke="#40b040" stroke-width="0.8"/>
<rect x="572.46" y="168.83" width="2.4" height="2.4" fill="#000" stroke="#40b040" stroke-width="0.8"/>
<rect x="325.48" y="179.39" width="2.4" height="2.4" fill="#000" stroke="#40b040" stroke-width="0.8"/>
<rect x="575.12" y="179.39" width="2.4" height="2.4" fill="#000" stroke="#40b040" stroke-width="0.8"/>
<rect x="320.81" y="189.33" width="2.4" height="2.4" fill="#000" stroke="#40b040" stroke-width="0.8"/>
<rect x="579.79" y="189.33" width="2.4" height="2.4" fill="#000" stroke="#40b040" stroke-width="0.8"/>
<rect x="323.34" y="107" width="2.2" height="2.2" fill="#40b040" stroke="#40b040" stroke-width="0.8"/>
<rect x="577.46" y="107" width="2.2" height="2.2" fill="#40b040" stroke="#40b040" stroke-width="0.8"/>
<rect x="325.85" y="117.71" width="2.2" height="2.2" fill="#40b040" stroke="#40b040" stroke-width="0.8"/>
<rect x="574.95" y="117.71" width="2.2" height="2.2" fill="#40b040" stroke="#40b040" stroke-width="0.8"/>
<rect x="328.11" y="128.48" width="2.2" height="2.2" fill="#40b040" stroke="#40b040" stroke-width="0.8"/>
<rect x="572.69" y="128.48" width="2.2" height="2.2" fill="#40b040" stroke="#40b040" stroke-width="0.8"/>
<rect x="330.25" y="139.26" width="2.2" height="2.2" fill="#40b040" stroke="#40b040" stroke-width="0.8"/>
<rect x="570.55" y="139.26" width="2.2" height="2.2" fill="#40b040" stroke="#40b040" stroke-width="0.8"/>
<rect x="332.09" y="150.11" width="2.2" height="2.2" fill="#40b040" stroke="#40b040" stroke-width="0.8"/>
<rect x="568.71" y="150.11" width="2.2" height="2.2" fill="#40b040" stroke="#40b040" stroke-width="0.8"/>
<rect x="333.02" y="161.06" width="2.2" height="2.2" fill="#40b040" stroke="#40b040" stroke-width="0.8"/>
<rect x="567.78" y="161.06" width="2.2" height="2.2" fill="#40b040" stroke="#40b040" stroke-width="0.8"/>
<rect x="332.53" y="172.04" width="2.2" height="2.2" fill="#40b040" stroke="#40b040" stroke-width="0.8"/>
<rect x="568.27" y="172.04" width="2.2" height="2.2" fill="#40b040" stroke="#40b040" stroke-width="0.8"/>
<rect x="329.27" y="182.46" width="2.2" height="2.2" fill="#40b040" stroke="#40b040" stroke-width="0.8"/>
<rect x="571.53" y="182.46" width="2.2" height="2.2" fill="#40b040" stroke="#40b040" stroke-width="0.8"/>
<rect x="323.38" y="191.69" width="2.2" height="2.2" fill="#40b040" stroke="#40b040" stroke-width="0.8"/>
<rect x="577.42" y="191.69" width="2.2" height="2.2" fill="#40b040" stroke="#40b040" stroke-width="0.8"/>
<rect x="342.55" y="87.88" width="2.2" height="2.2" fill="#000" stroke="#40b040" stroke-width="0.8"/>
<rect x="558.25" y="87.88" width="2.2" height="2.2" fill="#000" stroke="#40b040" stroke-width="0.8"/>
<rect x="337.64" y="88.86" width="2.2" height="2.2" fill="#000" stroke="#40b040" stroke-width="0.8"/>
<rect x="563.16" y="88.86" width="2.2" height="2.2" fill="#000" stroke="#40b040" stroke-width="0.8"/>
<rect x="332.74" y="89.84" width="2.2" height="2.2" fill="#000" stroke="#40b040" stroke-width="0.8"/>
<rect x="568.06" y="89.84" width="2.2" height="2.2" fill="#000" stroke="#40b040" stroke-width="0.8"/>
<rect x="327.84" y="90.82" width="2.2" height="2.2" fill="#000" stroke="#40b040" stroke-width="0.8"/>
<rect x="572.96" y="90.82" width="2.2" height="2.2" fill="#000" stroke="#40b040" stroke-width="0.8"/>
<rect x="322.93" y="91.79" width="2.2" height="2.2" fill="#000" stroke="#40b040" stroke-width="0.8"/>
<rect x="577.87" y="91.79" width="2.2" height="2.2" fill="#000" stroke="#40b040" stroke-width="0.8"/>
<rect x="318.03" y="92.77" width="2.2" height="2.2" fill="#000" stroke="#40b040" stroke-width="0.8"/>
<rect x="582.77" y="92.77" width="2.2" height="2.2" fill="#000" stroke="#40b040" stroke-width="0.8"/>
<circle cx="393.5" cy="409.1" r="2.0" fill="#40b040"/>
<circle cx="509.5" cy="409.1" r="2.0" fill="#40b040"/>
<circle cx="451.5" cy="409.1" r="2.5" fill="#40b040"/>
<circle cx="393.5" cy="419.8" r="2.0" fill="#40b040"/>
<circle cx="509.5" cy="419.8" r="2.0" fill="#40b040"/>
<circle cx="451.5" cy="419.8" r="2.5" fill="#40b040"/>
<circle cx="451.5" cy="91.5" r="2.1" fill="#f0f070"/>
<circle cx="451.5" cy="91.5" r="2.1" fill="#f0f070"/>
<circle cx="451.5" cy="87.5" r="2.1" fill="#f0f070"/>
<circle cx="451.5" cy="87.5" r="2.1" fill="#f0f070"/>
<circle cx="406.5" cy="80.5" r="2.1" fill="#f0f070"/>
<circle cx="496.5" cy="80.5" r="2.1" fill="#f0f070"/>
<circle cx="407.36" cy="76.22" r="2.1" fill="#f0f070"/>
<circle cx="495.64" cy="76.22" r="2.1" fill="#f0f070"/>
<circle cx="328.1" cy="97.4" r="2.1" fill="#f0f070"/>
<circle cx="574.9" cy="97.4" r="2.1" fill="#f0f070"/>
<circle cx="322.78" cy="94.46" r="2.1" fill="#f0f070"/>
<circle cx="580.22" cy="94.46" r="2.1" fill="#f0f070"/>
<circle cx="329.6" cy="189.4" r="2.1" fill="#f0f070"/>
<circle cx="573.4" cy="189.4" r="2.1" fill="#f0f070"/>
<circle cx="324.9" cy="190.71" r="2.1" fill="#f0f070"/>
<circle cx="578.1" cy="190.71" r="2.1" fill="#f0f070"/>
<circle cx="329.6" cy="395.7" r="2.1" fill="#f0f070"/>
<circle cx="573.4" cy="395.7" r="2.1" fill="#f0f070"/>
<circle cx="322.9" cy="406.7" r="2.1" fill="#f0f070"/>
<circle cx="580.1" cy="406.7" r="2.1" fill="#f0f070"/>
<circle cx="451.5" cy="395.7" r="2.1" fill="#f0f070"/>
<circle cx="451.5" cy="395.7" r="2.1" fill="#f0f070"/>
<circle cx="451.5" cy="406.7" r="2.1" fill="#f0f070"/>
<circle cx="451.5" cy="406.7" r="2.1" fill="#f0f070"/>
<rect x="324.11" y="103.96" width="2.4" height="2.4" fill="#000" stroke="#f0f070" stroke-width="0.8"/>
<rect x="576.49" y="103.96" width="2.4" height="2.4" fill="#000" stroke="#f0f070" stroke-width="0.8"/>
<rect x="326.64" y="114.66" width="2.4" height="2.4" fill="#000" stroke="#f0f070" stroke-width="0.8"/>
<rect x="573.96" y="114.66" width="2.4" height="2.4" fill="#000" stroke="#f0f070" stroke-width="0.8"/>
<rect x="328.94" y="125.42" width="2.4" height="2.4" fill="#000" stroke="#f0f070" stroke-width="0.8"/>
<rect x="571.66" y="125.42" width="2.4" height="2.4" fill="#000" stroke="#f0f070" stroke-width="0.8"/>
<rect x="331.17" y="136.19" width="2.4" height="2.4" fill="#000" stroke="#f0f070" stroke-width="0.8"/>
<rect x="569.43" y="136.19" width="2.4" height="2.4" fill="#000" stroke="#f0f070" stroke-width="0.8"/>
<rect x="332.97" y="147.04" width="2.4" height="2.4" fill="#000" stroke="#f0f070" stroke-width="0.8"/>
<rect x="567.63" y="147.04" width="2.4" height="2.4" fill="#000" stroke="#f0f070" stroke-width="0.8"/>
<rect x="334.01" y="157.98" width="2.4" height="2.4" fill="#000" stroke="#f0f070" stroke-width="0.8"/>
<rect x="566.59" y="157.98" width="2.4" height="2.4" fill="#000" stroke="#f0f070" stroke-width="0.8"/>
<rect x="333.48" y="168.94" width="2.4" height="2.4" fill="#000" stroke="#f0f070" stroke-width="0.8"/>
<rect x="567.12" y="168.94" width="2.4" height="2.4" fill="#000" stroke="#f0f070" stroke-width="0.8"/>
<rect x="329.72" y="179.21" width="2.4" height="2.4" fill="#000" stroke="#f0f070" stroke-width="0.8"/>
<rect x="570.88" y="179.21" width="2.4" height="2.4" fill="#000" stroke="#f0f070" stroke-width="0.8"/>
<rect x="324.17" y="188.71" width="2.4" height="2.4" fill="#000" stroke="#f0f070" stroke-width="0.8"/>
<rect x="576.43" y="188.71" width="2.4" height="2.4" fill="#000" stroke="#f0f070" stroke-width="0.8"/>
<rect x="329.53" y="107" width="2.2" height="2.2" fill="#f0f070" stroke="#f0f070" stroke-width="0.8"/>
<rect x="571.27" y="107" width="2.2" height="2.2" fill="#f0f070" stroke="#f0f070" stroke-width="0.8"/>
<rect x="332.01" y="117.72" width="2.2" height="2.2" fill="#f0f070" stroke="#f0f070" stroke-width="0.8"/>
<rect x="568.79" y="117.72" width="2.2" height="2.2" fill="#f0f070" stroke="#f0f070" stroke-width="0.8"/>
<rect x="334.25" y="128.49" width="2.2" height="2.2" fill="#f0f070" stroke="#f0f070" stroke-width="0.8"/>
<rect x="566.55" y="128.49" width="2.2" height="2.2" fill="#f0f070" stroke="#f0f070" stroke-width="0.8"/>
<rect x="336.33" y="139.29" width="2.2" height="2.2" fill="#f0f070" stroke="#f0f070" stroke-width="0.8"/>
<rect x="564.47" y="139.29" width="2.2" height="2.2" fill="#f0f070" stroke="#f0f070" stroke-width="0.8"/>
<rect x="338.12" y="150.14" width="2.2" height="2.2" fill="#f0f070" stroke="#f0f070" stroke-width="0.8"/>
<rect x="562.68" y="150.14" width="2.2" height="2.2" fill="#f0f070" stroke="#f0f070" stroke-width="0.8"/>
<rect x="338.78" y="161.12" width="2.2" height="2.2" fill="#f0f070" stroke="#f0f070" stroke-width="0.8"/>
<rect x="562.02" y="161.12" width="2.2" height="2.2" fill="#f0f070" stroke="#f0f070" stroke-width="0.8"/>
<rect x="337.73" y="172.05" width="2.2" height="2.2" fill="#f0f070" stroke="#f0f070" stroke-width="0.8"/>
<rect x="563.07" y="172.05" width="2.2" height="2.2" fill="#f0f070" stroke="#f0f070" stroke-width="0.8"/>
<rect x="333.3" y="182.09" width="2.2" height="2.2" fill="#f0f070" stroke="#f0f070" stroke-width="0.8"/>
<rect x="567.5" y="182.09" width="2.2" height="2.2" fill="#f0f070" stroke="#f0f070" stroke-width="0.8"/>
<rect x="347.6" y="87.77" width="2.2" height="2.2" fill="#000" stroke="#f0f070" stroke-width="0.8"/>
<rect x="553.2" y="87.77" width="2.2" height="2.2" fill="#000" stroke="#f0f070" stroke-width="0.8"/>
<rect x="342.72" y="88.82" width="2.2" height="2.2" fill="#000" stroke="#f0f070" stroke-width="0.8"/>
<rect x="558.08" y="88.82" width="2.2" height="2.2" fill="#000" stroke="#f0f070" stroke-width="0.8"/>
<rect x="337.83" y="89.87" width="2.2" height="2.2" fill="#000" stroke="#f0f070" stroke-width="0.8"/>
<rect x="562.97" y="89.87" width="2.2" height="2.2" fill="#000" stroke="#f0f070" stroke-width="0.8"/>
<rect x="332.94" y="90.93" width="2.2" height="2.2" fill="#000" stroke="#f0f070" stroke-width="0.8"/>
<rect x="567.86" y="90.93" width="2.2" height="2.2" fill="#000" stroke="#f0f070" stroke-width="0.8"/>
<rect x="328.05" y="91.98" width="2.2" height="2.2" fill="#000" stroke="#f0f070" stroke-width="0.8"/>
<rect x="572.75" y="91.98" width="2.2" height="2.2" fill="#000" stroke="#f0f070" stroke-width="0.8"/>
<rect x="323.16" y="93.03" width="2.2" height="2.2" fill="#000" stroke="#f0f070" stroke-width="0.8"/>
<rect x="577.64" y="93.03" width="2.2" height="2.2" fill="#000" stroke="#f0f070" stroke-width="0.8"/>
<circle cx="395.5" cy="395.7" r="2.0" fill="#f0f070"/>
<circle cx="507.5" cy="395.7" r="2.0" fill="#f0f070"/>
<circle cx="451.5" cy="395.7" r="2.5" fill="#f0f070"/>
<circle cx="395.5" cy="406.7" r="2.0" fill="#f0f070"/>
<circle cx="507.5" cy="406.7" r="2.0" fill="#f0f070"/>
<circle cx="451.5" cy="406.7" r="2.5" fill="#f0f070"/>
<circle cx="451.5" cy="91.5" r="2.1" fill="#ffffff"/>
<circle cx="451.5" cy="91.5" r="2.1" fill="#ffffff"/>
<circle cx="451.5" cy="87.5" r="2.1" fill="#ffffff"/>
<circle cx="451.5" cy="87.5" r="2.1" fill="#ffffff"/>
<circle cx="406.5" cy="80.5" r="2.1" fill="#ffffff"/>
<circle cx="496.5" cy="80.5" r="2.1" fill="#ffffff"/>
<circle cx="407.34" cy="76.21" r="2.1" fill="#ffffff"/>
<circle cx="495.66" cy="76.21" r="2.1" fill="#ffffff"/>
<circle cx="332.5" cy="97.2" r="2.1" fill="#ffffff"/>
<circle cx="570.5" cy="97.2" r="2.1" fill="#ffffff"/>
<circle cx="327.18" cy="94.3" r="2.1" fill="#ffffff"/>
<circle cx="575.82" cy="94.3" r="2.1" fill="#ffffff"/>
<circle cx="333.5" cy="185.5" r="2.1" fill="#ffffff"/>
<circle cx="569.5" cy="185.5" r="2.1" fill="#ffffff"/>
<circle cx="329.4" cy="185.74" r="2.1" fill="#ffffff"/>
<circle cx="573.6" cy="185.74" r="2.1" fill="#ffffff"/>
<circle cx="333.5" cy="386.5" r="2.1" fill="#ffffff"/>
<circle cx="569.5" cy="386.5" r="2.1" fill="#ffffff"/>
<circle cx="327.4" cy="398.6" r="2.1" fill="#ffffff"/>
<circle cx="575.6" cy="398.6" r="2.1" fill="#ffffff"/>
<circle cx="451.5" cy="386.5" r="2.1" fill="#ffffff"/>
<circle cx="451.5" cy="386.5" r="2.1" fill="#ffffff"/>
<circle cx="451.5" cy="398.6" r="2.1" fill="#ffffff"/>
<circle cx="451.5" cy="398.6" r="2.1" fill="#ffffff"/>
<rect x="328.54" y="103.8" width="2.4" height="2.4" fill="#000" stroke="#ffffff" stroke-width="0.8"/>
<rect x="572.06" y="103.8" width="2.4" height="2.4" fill="#000" stroke="#ffffff" stroke-width="0.8"/>
<rect x="331.1" y="114.5" width="2.4" height="2.4" fill="#000" stroke="#ffffff" stroke-width="0.8"/>
<rect x="569.5" y="114.5" width="2.4" height="2.4" fill="#000" stroke="#ffffff" stroke-width="0.8"/>
<rect x="333.4" y="125.25" width="2.4" height="2.4" fill="#000" stroke="#ffffff" stroke-width="0.8"/>
<rect x="567.2" y="125.25" width="2.4" height="2.4" fill="#000" stroke="#ffffff" stroke-width="0.8"/>
<rect x="335.61" y="136.03" width="2.4" height="2.4" fill="#000" stroke="#ffffff" stroke-width="0.8"/>
<rect x="564.99" y="136.03" width="2.4" height="2.4" fill="#000" stroke="#ffffff" stroke-width="0.8"/>
<rect x="337.42" y="146.88" width="2.4" height="2.4" fill="#000" stroke="#ffffff" stroke-width="0.8"/>
<rect x="563.18" y="146.88" width="2.4" height="2.4" fill="#000" stroke="#ffffff" stroke-width="0.8"/>
<rect x="338.25" y="157.83" width="2.4" height="2.4" fill="#000" stroke="#ffffff" stroke-width="0.8"/>
<rect x="562.35" y="157.83" width="2.4" height="2.4" fill="#000" stroke="#ffffff" stroke-width="0.8"/>
<rect x="336.93" y="168.69" width="2.4" height="2.4" fill="#000" stroke="#ffffff" stroke-width="0.8"/>
<rect x="563.67" y="168.69" width="2.4" height="2.4" fill="#000" stroke="#ffffff" stroke-width="0.8"/>
<rect x="332" y="178.49" width="2.4" height="2.4" fill="#000" stroke="#ffffff" stroke-width="0.8"/>
<rect x="568.6" y="178.49" width="2.4" height="2.4" fill="#000" stroke="#ffffff" stroke-width="0.8"/>
<rect x="333.96" y="106.8" width="2.2" height="2.2" fill="#ffffff" stroke="#ffffff" stroke-width="0.8"/>
<rect x="566.84" y="106.8" width="2.2" height="2.2" fill="#ffffff" stroke="#ffffff" stroke-width="0.8"/>
<rect x="336.45" y="117.51" width="2.2" height="2.2" fill="#ffffff" stroke="#ffffff" stroke-width="0.8"/>
<rect x="564.35" y="117.51" width="2.2" height="2.2" fill="#ffffff" stroke="#ffffff" stroke-width="0.8"/>
<rect x="338.72" y="128.28" width="2.2" height="2.2" fill="#ffffff" stroke="#ffffff" stroke-width="0.8"/>
<rect x="562.08" y="128.28" width="2.2" height="2.2" fill="#ffffff" stroke="#ffffff" stroke-width="0.8"/>
<rect x="340.76" y="139.08" width="2.2" height="2.2" fill="#ffffff" stroke="#ffffff" stroke-width="0.8"/>
<rect x="560.04" y="139.08" width="2.2" height="2.2" fill="#ffffff" stroke="#ffffff" stroke-width="0.8"/>
<rect x="342.45" y="149.94" width="2.2" height="2.2" fill="#ffffff" stroke="#ffffff" stroke-width="0.8"/>
<rect x="558.35" y="149.94" width="2.2" height="2.2" fill="#ffffff" stroke="#ffffff" stroke-width="0.8"/>
<rect x="342.7" y="160.92" width="2.2" height="2.2" fill="#ffffff" stroke="#ffffff" stroke-width="0.8"/>
<rect x="558.1" y="160.92" width="2.2" height="2.2" fill="#ffffff" stroke="#ffffff" stroke-width="0.8"/>
<rect x="340.69" y="171.63" width="2.2" height="2.2" fill="#ffffff" stroke="#ffffff" stroke-width="0.8"/>
<rect x="560.11" y="171.63" width="2.2" height="2.2" fill="#ffffff" stroke="#ffffff" stroke-width="0.8"/>
<rect x="335.23" y="181.06" width="2.2" height="2.2" fill="#ffffff" stroke="#ffffff" stroke-width="0.8"/>
<rect x="565.57" y="181.06" width="2.2" height="2.2" fill="#ffffff" stroke="#ffffff" stroke-width="0.8"/>
<rect x="352.59" y="87.22" width="2.2" height="2.2" fill="#000" stroke="#ffffff" stroke-width="0.8"/>
<rect x="548.21" y="87.22" width="2.2" height="2.2" fill="#000" stroke="#ffffff" stroke-width="0.8"/>
<rect x="347.71" y="88.32" width="2.2" height="2.2" fill="#000" stroke="#ffffff" stroke-width="0.8"/>
<rect x="553.09" y="88.32" width="2.2" height="2.2" fill="#000" stroke="#ffffff" stroke-width="0.8"/>
<rect x="342.83" y="89.42" width="2.2" height="2.2" fill="#000" stroke="#ffffff" stroke-width="0.8"/>
<rect x="557.97" y="89.42" width="2.2" height="2.2" fill="#000" stroke="#ffffff" stroke-width="0.8"/>
<rect x="337.95" y="90.52" width="2.2" height="2.2" fill="#000" stroke="#ffffff" stroke-width="0.8"/>
<rect x="562.85" y="90.52" width="2.2" height="2.2" fill="#000" stroke="#ffffff" stroke-width="0.8"/>
<rect x="333.08" y="91.62" width="2.2" height="2.2" fill="#000" stroke="#ffffff" stroke-width="0.8"/>
<rect x="567.72" y="91.62" width="2.2" height="2.2" fill="#000" stroke="#ffffff" stroke-width="0.8"/>
<rect x="328.2" y="92.72" width="2.2" height="2.2" fill="#000" stroke="#ffffff" stroke-width="0.8"/>
<rect x="572.6" y="92.72" width="2.2" height="2.2" fill="#000" stroke="#ffffff" stroke-width="0.8"/>
<circle cx="397.5" cy="386.5" r="2.0" fill="#ffffff"/>
<circle cx="505.5" cy="386.5" r="2.0" fill="#ffffff"/>
<circle cx="451.5" cy="386.5" r="2.5" fill="#ffffff"/>
<circle cx="397.5" cy="398.6" r="2.0" fill="#ffffff"/>
<circle cx="505.5" cy="398.6" r="2.0" fill="#ffffff"/>
<circle cx="451.5" cy="398.6" r="2.5" fill="#ffffff"/>
<circle cx="315.9" cy="350.2" r="2.1" fill="#c0a0ff"/>
<circle cx="587.1" cy="350.2" r="2.1" fill="#c0a0ff"/>
<circle cx="309.6" cy="350.2" r="2.1" fill="#c0a0ff"/>
<circle cx="593.4" cy="350.2" r="2.1" fill="#c0a0ff"/>
<circle cx="315.9" cy="369" r="2.1" fill="#c0a0ff"/>
<circle cx="587.1" cy="369" r="2.1" fill="#c0a0ff"/>
<circle cx="309.6" cy="369" r="2.1" fill="#c0a0ff"/>
<circle cx="593.4" cy="369" r="2.1" fill="#c0a0ff"/>
<circle cx="324.4" cy="337.7" r="2.1" fill="#40b040"/>
<circle cx="578.6" cy="337.7" r="2.1" fill="#40b040"/>
<circle cx="318.6" cy="337.7" r="2.1" fill="#40b040"/>
<circle cx="584.4" cy="337.7" r="2.1" fill="#40b040"/>
<circle cx="324.4" cy="355" r="2.1" fill="#40b040"/>
<circle cx="578.6" cy="355" r="2.1" fill="#40b040"/>
<circle cx="318.6" cy="355" r="2.1" fill="#40b040"/>
<circle cx="584.4" cy="355" r="2.1" fill="#40b040"/>
<circle cx="329.6" cy="326" r="2.1" fill="#f0f070"/>
<circle cx="573.4" cy="326" r="2.1" fill="#f0f070"/>
<circle cx="322.9" cy="326" r="2.1" fill="#f0f070"/>
<circle cx="580.1" cy="326" r="2.1" fill="#f0f070"/>
<circle cx="329.6" cy="342.4" r="2.1" fill="#f0f070"/>
<circle cx="573.4" cy="342.4" r="2.1" fill="#f0f070"/>
<circle cx="322.9" cy="342.4" r="2.1" fill="#f0f070"/>
<circle cx="580.1" cy="342.4" r="2.1" fill="#f0f070"/>
<circle cx="333.5" cy="316.5" r="2.1" fill="#ffffff"/>
<circle cx="569.5" cy="316.5" r="2.1" fill="#ffffff"/>
<circle cx="327.4" cy="316.5" r="2.1" fill="#ffffff"/>
<circle cx="575.6" cy="316.5" r="2.1" fill="#ffffff"/>
<circle cx="333.5" cy="333" r="2.1" fill="#ffffff"/>
<circle cx="569.5" cy="333" r="2.1" fill="#ffffff"/>
<circle cx="327.4" cy="333" r="2.1" fill="#ffffff"/>
<circle cx="575.6" cy="333" r="2.1" fill="#ffffff"/>
<line x1="509.5" y1="80" x2="518.5" y2="385" stroke="#c8c8c8" stroke-width="1"/>
<path d="M515.77 373.31 L518.5 385 L520.54 373.17" fill="none" stroke="#c8c8c8" stroke-width="1"/>
<path d="M512.23 91.69 L509.5 80 L507.46 91.83" fill="none" stroke="#c8c8c8" stroke-width="1"/>
<line x1="337" y1="172.5" x2="565.5" y2="172.5" stroke="#c8c8c8" stroke-width="1"/>
<path d="M553.74 174.88 L565.5 172.5 L553.74 170.12" fill="none" stroke="#c8c8c8" stroke-width="1"/>
<path d="M348.76 170.12 L337 172.5 L348.76 174.88" fill="none" stroke="#c8c8c8" stroke-width="1"/>
<text x="385.6" y="32.5" fill="#ffffff" font-size="10" text-anchor="middle" dominant-baseline="central" letter-spacing="0.15" font-family="Liberation Sans, sans-serif">2</text>
<text x="382.5" y="47.5" fill="#ffffff" font-size="10" text-anchor="middle" dominant-baseline="central" letter-spacing="0.15" font-family="Liberation Sans, sans-serif">1</text>
<text x="384.5" y="47.5" fill="#ffffff" font-size="10" text-anchor="middle" dominant-baseline="central" letter-spacing="0.15" font-family="Liberation Sans, sans-serif">3</text>
<text x="327" y="88" fill="#ffffff" font-size="10" text-anchor="middle" dominant-baseline="central" letter-spacing="0.15" font-family="Liberation Sans, sans-serif">12</text>
<text x="370.3" y="86" fill="#ffffff" font-size="10" text-anchor="middle" dominant-baseline="central" letter-spacing="0.15" font-family="Liberation Sans, sans-serif">16.72</text>
<rect x="355.8" y="83.8" width="29" height="12" fill="#000"/>
<text x="370.3" y="89.8" fill="#ffffff" font-size="10" text-anchor="middle" dominant-baseline="central" letter-spacing="0.15" font-family="Liberation Sans, sans-serif">17.12</text>
<text x="413" y="72" fill="#ffffff" font-size="10" text-anchor="middle" dominant-baseline="central" letter-spacing="0.15" font-family="Liberation Sans, sans-serif">13</text>
<rect x="418.5" y="83.9" width="21" height="12" fill="#000"/>
<text x="429" y="89.9" fill="#ffffff" font-size="10" text-anchor="middle" dominant-baseline="central" letter-spacing="0.15" font-family="Liberation Sans, sans-serif">10.72</text>
<text x="456" y="83" fill="#ffffff" font-size="10" text-anchor="middle" dominant-baseline="central" letter-spacing="0.15" font-family="Liberation Sans, sans-serif">14</text>
<text x="533" y="86" fill="#ffffff" font-size="10" text-anchor="middle" dominant-baseline="central" letter-spacing="0.15" font-family="Liberation Sans, sans-serif">16.72</text>
<rect x="518.5" y="83.8" width="29" height="12" fill="#000"/>
<text x="533" y="89.8" fill="#ffffff" font-size="10" text-anchor="middle" dominant-baseline="central" letter-spacing="0.15" font-family="Liberation Sans, sans-serif">17.12</text>
<rect x="463.5" y="83.9" width="21" height="12" fill="#000"/>
<text x="474" y="89.9" fill="#ffffff" font-size="10" text-anchor="middle" dominant-baseline="central" letter-spacing="0.15" font-family="Liberation Sans, sans-serif">10.72</text>
<text x="570.5" y="105" fill="#ffffff" font-size="10" text-anchor="middle" dominant-baseline="central" letter-spacing="0.15" font-family="Liberation Sans, sans-serif">12</text>
<text x="498" y="70" fill="#ffffff" font-size="10" text-anchor="middle" dominant-baseline="central" letter-spacing="0.15" font-family="Liberation Sans, sans-serif">1</text>
<text x="448" y="156.6" fill="#c8c8c8" font-size="10" text-anchor="middle" dominant-baseline="central" letter-spacing="0.15" font-family="Liberation Sans, sans-serif">/</text>
<text x="459.5" y="156.6" fill="#ffffff" font-size="10" text-anchor="middle" dominant-baseline="central" letter-spacing="0.15" font-family="Liberation Sans, sans-serif">BS1</text>
<rect x="406" y="166.5" width="91" height="12" fill="#000"/>
<text x="451.5" y="172.5" fill="#c8c8c8" font-size="10" text-anchor="middle" dominant-baseline="central" letter-spacing="0.15" font-family="Liberation Sans, sans-serif">LINGKAR DADA[1]</text>
<rect x="444" y="179.8" width="15" height="12" fill="#000"/>
<text x="451.5" y="185.8" fill="#ffffff" font-size="10" text-anchor="middle" dominant-baseline="central" letter-spacing="0.15" font-family="Liberation Sans, sans-serif">53</text>
<rect x="327.5" y="136.5" width="30" height="12" fill="#000"/>
<text x="342.5" y="142.5" fill="#ffffff" font-size="10" text-anchor="middle" dominant-baseline="central" letter-spacing="0.15" font-family="Liberation Sans, sans-serif">20.72</text>
<rect x="545.5" y="136.5" width="30" height="12" fill="#000"/>
<text x="560.5" y="142.5" fill="#ffffff" font-size="10" text-anchor="middle" dominant-baseline="central" letter-spacing="0.15" font-family="Liberation Sans, sans-serif">20.72</text>
<rect x="319" y="245.2" width="30" height="12" fill="#000"/>
<text x="334" y="251.2" fill="#ffffff" font-size="10" text-anchor="middle" dominant-baseline="central" letter-spacing="0.15" font-family="Liberation Sans, sans-serif">29.67</text>
<rect x="555" y="245.2" width="30" height="12" fill="#000"/>
<text x="570" y="251.2" fill="#ffffff" font-size="10" text-anchor="middle" dominant-baseline="central" letter-spacing="0.15" font-family="Liberation Sans, sans-serif">29.67</text>
<rect x="465" y="227.6" width="108" height="11.5" fill="#000"/>
<text x="514.5" y="233.4" fill="#c8c8c8" font-size="10" text-anchor="middle" dominant-baseline="central" letter-spacing="0.15" font-family="Liberation Sans, sans-serif">OPANJANG BELAKANG</text>
<text x="436" y="236.5" fill="#ffffff" font-size="10.3" text-anchor="middle" dominant-baseline="central" font-family="Liberation Sans, sans-serif" transform="rotate(-90 436 236.5)">PB172</text>
<text x="447" y="230.6" fill="#ffffff" font-size="10.3" text-anchor="middle" dominant-baseline="central" font-family="Liberation Sans, sans-serif" transform="rotate(-90 447 230.6)">BELAKANG</text>
<text x="456.3" y="237.3" fill="#ffffff" font-size="10.3" text-anchor="middle" dominant-baseline="central" font-family="Liberation Sans, sans-serif" transform="rotate(-90 456.3 237.3)">M,L,XL,XXL</text>
<text x="327.5" y="308.6" fill="#ffffff" font-size="10" text-anchor="middle" dominant-baseline="central" letter-spacing="0.15" font-family="Liberation Sans, sans-serif">10</text>
<rect x="316.6" y="319.1" width="28" height="12" fill="#000"/>
<text x="330.6" y="325.1" fill="#ffffff" font-size="10" text-anchor="middle" dominant-baseline="central" letter-spacing="0.15" font-family="Liberation Sans, sans-serif">3.399</text>
<rect x="558.5" y="319.1" width="28" height="12" fill="#000"/>
<text x="572.5" y="325.1" fill="#ffffff" font-size="10" text-anchor="middle" dominant-baseline="central" letter-spacing="0.15" font-family="Liberation Sans, sans-serif">3.899</text>
<text x="334" y="360.4" fill="#ffffff" font-size="10" text-anchor="middle" dominant-baseline="central" letter-spacing="0.15" font-family="Liberation Sans, sans-serif">12</text>
<text x="569" y="360.4" fill="#ffffff" font-size="10" text-anchor="middle" dominant-baseline="central" letter-spacing="0.15" font-family="Liberation Sans, sans-serif">12</text>
<text x="583.5" y="365" fill="#ffffff" font-size="10" text-anchor="middle" dominant-baseline="central" letter-spacing="0.15" font-family="Liberation Sans, sans-serif">5</text>
<rect x="381.5" y="380.5" width="23" height="12" fill="#000"/>
<text x="393" y="386.5" fill="#ffffff" font-size="10" text-anchor="middle" dominant-baseline="central" letter-spacing="0.15" font-family="Liberation Sans, sans-serif">26.5</text>
<rect x="498.8" y="380.5" width="23" height="12" fill="#000"/>
<text x="510.3" y="386.5" fill="#ffffff" font-size="10" text-anchor="middle" dominant-baseline="central" letter-spacing="0.15" font-family="Liberation Sans, sans-serif">26.5</text>
<rect x="382" y="396.2" width="14" height="6" fill="#000"/>
<text x="389" y="399.2" fill="#ffffff" font-size="10" text-anchor="middle" dominant-baseline="central" letter-spacing="0.15" font-family="Liberation Sans, sans-serif">28</text>
<rect x="505.7" y="396.2" width="14" height="6" fill="#000"/>
<text x="512.7" y="399.2" fill="#ffffff" font-size="10" text-anchor="middle" dominant-baseline="central" letter-spacing="0.15" font-family="Liberation Sans, sans-serif">28</text>
<text x="447.3" y="392" fill="#f0f0b0" font-size="10" text-anchor="middle" dominant-baseline="central" letter-spacing="0.15" font-family="Liberation Sans, sans-serif">7</text>
<text x="565.8" y="393" fill="#f0f0c0" font-size="10" text-anchor="middle" dominant-baseline="central" letter-spacing="0.15" font-family="Liberation Sans, sans-serif">6</text>
<line x1="383.5" y1="41.5" x2="583.5" y2="41.5" stroke="#ffffff" stroke-width="1"/>
<line x1="383.5" y1="54.5" x2="583.5" y2="54.5" stroke="#ffffff" stroke-width="1"/>
<circle cx="383.5" cy="41.5" r="2.5" fill="#ffffff"/>
<circle cx="383.5" cy="54.5" r="2.5" fill="#ffffff"/>
<circle cx="583.5" cy="41.5" r="2.5" fill="#ffffff"/>
<circle cx="583.5" cy="54.5" r="2.5" fill="#ffffff"/>
<line x1="592.5" y1="41.5" x2="592.5" y2="54.5" stroke="#c0a0ff" stroke-width="1"/>
<circle cx="592.5" cy="41.5" r="2.5" fill="#c0a0ff"/>
<circle cx="592.5" cy="54.5" r="2.5" fill="#c0a0ff"/>
<text x="585" y="47.5" fill="#ffffff" font-size="10" text-anchor="middle" dominant-baseline="central" letter-spacing="0.15" font-family="Liberation Sans, sans-serif">3</text>
<text x="580" y="63" fill="#ffffff" font-size="10" text-anchor="middle" dominant-baseline="central" letter-spacing="0.15" font-family="Liberation Sans, sans-serif">4</text>
<rect x="476" y="35.5" width="14" height="12" fill="#000"/>
<text x="483" y="41.5" fill="#ffffff" font-size="10" text-anchor="middle" dominant-baseline="central" letter-spacing="0.15" font-family="Liberation Sans, sans-serif">45</text>
<rect x="476" y="48.5" width="14" height="12" fill="#000"/>
<text x="483" y="54.5" fill="#ffffff" font-size="10" text-anchor="middle" dominant-baseline="central" letter-spacing="0.15" font-family="Liberation Sans, sans-serif">45</text>
<text x="478.2" y="49.6" fill="#ffffff" font-size="10.3" text-anchor="middle" dominant-baseline="central" font-family="Liberation Sans, sans-serif" transform="rotate(90 478.2 49.6)">M,L,XL,XXL</text>
<text x="497.7" y="50.3" fill="#ffffff" font-size="10.3" text-anchor="middle" dominant-baseline="central" font-family="Liberation Sans, sans-serif" transform="rotate(90 497.7 50.3)">PB172</text>
<path d="M738.76 122.77 L725.7 120.26 L715.16 115.58 L709.1 110.39 L704.52 102.66 L701.5 94.75 L696.16 75.56 L599.56 94.62 L602.51 113.3 L604.88 128.27 L606.72 138.07 L609.5 162.76 L608.15 173.02 L605.95 183.03 L598.6 196.06 L596.6 433.3 L738 433.3 L879.4 433.3 L877.4 196.06 L870.05 183.03 L867.85 173.02 L866.5 162.76 L869.28 138.07 L871.12 128.27 L873.49 113.3 L876.44 94.62 L779.84 75.56 L774.5 94.75 L771.48 102.66 L766.9 110.39 L760.84 115.58 L750.3 120.26 L737.24 122.77" fill="none" stroke="#c0a0ff" stroke-width="1" stroke-dasharray="3 2"/>
<path d="M738 126.7 L724.5 124.1 L713 119 L706 113 L700.9 104.4 L697.7 96 L693.3 80.2 L604.6 97.7 L606.96 112.6 L609.31 127.5 L611.17 137.4 L614.03 162.8 L612.59 173.8 L610.14 184.9 L602.9 195 L602.9 422.2 L738 422.2 L873.1 422.2 L873.1 195 L865.86 184.9 L863.41 173.8 L861.97 162.8 L864.83 137.4 L866.69 127.5 L869.04 112.6 L871.4 97.7 L782.7 80.2 L778.3 96 L775.1 104.4 L770 113 L763 119 L751.5 124.1 L738 126.7" fill="none" stroke="#c0a0ff" stroke-width="1"/>
<path d="M738.76 122.77 L725.7 120.26 L715.16 115.58 L709.1 110.39 L704.52 102.66 L701.5 94.75 L696.15 75.52 L604.01 94.69 L607.7 113.11 L610.64 127.75 L613.02 137.15 L616.33 161.43 L615.5 171.37 L613.82 180.93 L607.6 192.89 L605.6 419.6 L738 419.6 L870.4 419.6 L868.4 192.89 L862.18 180.93 L860.5 171.37 L859.67 161.43 L862.98 137.15 L865.36 127.75 L868.3 113.11 L871.99 94.69 L779.85 75.52 L774.5 94.75 L771.48 102.66 L766.9 110.39 L760.84 115.58 L750.3 120.26 L737.24 122.77" fill="none" stroke="#40b040" stroke-width="1" stroke-dasharray="3 2"/>
<path d="M738 126.7 L724.5 124.1 L713 119 L706 113 L700.9 104.4 L697.7 96 L693.3 80.2 L609.2 97.7 L612.11 112.23 L615.03 126.76 L617.44 136.29 L620.86 161.31 L619.97 171.94 L618.09 182.67 L611.4 192.4 L611.4 408.9 L738 408.9 L864.6 408.9 L864.6 192.4 L857.91 182.67 L856.03 171.94 L855.14 161.31 L858.56 136.29 L860.97 126.76 L863.89 112.23 L866.8 97.7 L782.7 80.2 L778.3 96 L775.1 104.4 L770 113 L763 119 L751.5 124.1 L738 126.7" fill="none" stroke="#40b040" stroke-width="1"/>
<path d="M738.76 122.77 L725.7 120.26 L715.16 115.58 L709.1 110.39 L704.52 102.66 L701.5 94.75 L696.13 75.46 L610.23 94.76 L613.76 112.6 L616.55 126.74 L618.79 135.63 L621.96 159.39 L621 168.78 L619.21 177.81 L611.9 190.39 L609.9 406.5 L738 406.5 L866.1 406.5 L864.1 190.39 L856.79 177.81 L855 168.78 L854.04 159.39 L857.21 135.63 L859.45 126.74 L862.24 112.6 L865.77 94.76 L779.87 75.46 L774.5 94.75 L771.48 102.66 L766.9 110.39 L760.84 115.58 L750.3 120.26 L737.24 122.77" fill="none" stroke="#f0f070" stroke-width="1" stroke-dasharray="3 2"/>
<path d="M738 126.7 L724.5 124.1 L713 119 L706 113 L700.9 104.4 L697.7 96 L693.3 80.2 L615.4 97.7 L618.17 111.73 L620.94 125.76 L623.21 134.79 L626.49 159.31 L625.46 169.44 L623.43 179.67 L616.6 188.9 L616.6 395.5 L738 395.5 L859.4 395.5 L859.4 188.9 L852.57 179.67 L850.54 169.44 L849.51 159.31 L852.79 134.79 L855.06 125.76 L857.83 111.73 L860.6 97.7 L782.7 80.2 L778.3 96 L775.1 104.4 L770 113 L763 119 L751.5 124.1 L738 126.7" fill="none" stroke="#f0f070" stroke-width="1"/>
<path d="M738.76 122.77 L725.7 120.26 L715.16 115.58 L709.1 110.39 L704.52 102.66 L701.5 94.75 L696.12 75.43 L614.63 94.61 L618.09 111.88 L620.81 125.51 L622.98 133.86 L626.07 157.04 L625.05 165.87 L623.22 174.32 L616.4 185.45 L614.4 398.4 L738 398.4 L861.6 398.4 L859.6 185.45 L852.78 174.32 L850.95 165.87 L849.93 157.04 L853.02 133.86 L855.19 125.51 L857.91 111.88 L861.37 94.61 L779.88 75.43 L774.5 94.75 L771.48 102.66 L766.9 110.39 L760.84 115.58 L750.3 120.26 L737.24 122.77" fill="none" stroke="#ffffff" stroke-width="1" stroke-dasharray="3 2"/>
<path d="M738 126.7 L724.5 124.1 L713 119 L706 113 L700.9 104.4 L697.7 96 L693.3 80.2 L619.8 97.5 L622.5 111 L625.2 124.5 L627.4 133 L630.6 157 L629.5 166.6 L627.4 176.3 L620.5 185 L620.5 386.3 L738 386.3 L855.5 386.3 L855.5 185 L848.6 176.3 L846.5 166.6 L845.4 157 L848.6 133 L850.8 124.5 L853.5 111 L856.2 97.5 L782.7 80.2 L778.3 96 L775.1 104.4 L770 113 L763 119 L751.5 124.1 L738 126.7" fill="none" stroke="#ffffff" stroke-width="1"/>
<line x1="620.5" y1="185.5" x2="855.5" y2="185.5" stroke="#ffffff" stroke-width="1"/>
<line x1="616.6" y1="189.4" x2="859.4" y2="189.4" stroke="#f0f070" stroke-width="1"/>
<line x1="611.4" y1="192.2" x2="864.6" y2="192.2" stroke="#40b040" stroke-width="1"/>
<line x1="602.9" y1="195" x2="873.1" y2="195" stroke="#c0a0ff" stroke-width="1"/>
<line x1="737.5" y1="126.7" x2="737.5" y2="180" stroke="#ffffff" stroke-width="1" stroke-dasharray="11 5"/>
<line x1="737.5" y1="180" x2="737.5" y2="328" stroke="#ffffff" stroke-width="1"/>
<line x1="737.5" y1="328" x2="737.5" y2="386" stroke="#ffffff" stroke-width="1" stroke-dasharray="10 4"/>
<line x1="737.5" y1="386" x2="737.5" y2="434" stroke="#ffffff" stroke-width="1" stroke-dasharray="6 3"/>
<circle cx="738" cy="126.7" r="2.1" fill="#c0a0ff"/>
<circle cx="738" cy="126.7" r="2.1" fill="#c0a0ff"/>
<circle cx="738.76" cy="122.77" r="2.1" fill="#c0a0ff"/>
<circle cx="737.24" cy="122.77" r="2.1" fill="#c0a0ff"/>
<circle cx="693.3" cy="80.2" r="2.1" fill="#c0a0ff"/>
<circle cx="782.7" cy="80.2" r="2.1" fill="#c0a0ff"/>
<circle cx="696.16" cy="75.56" r="2.1" fill="#c0a0ff"/>
<circle cx="779.84" cy="75.56" r="2.1" fill="#c0a0ff"/>
<circle cx="604.6" cy="97.7" r="2.1" fill="#c0a0ff"/>
<circle cx="871.4" cy="97.7" r="2.1" fill="#c0a0ff"/>
<circle cx="599.56" cy="94.62" r="2.1" fill="#c0a0ff"/>
<circle cx="876.44" cy="94.62" r="2.1" fill="#c0a0ff"/>
<circle cx="602.9" cy="195" r="2.1" fill="#c0a0ff"/>
<circle cx="873.1" cy="195" r="2.1" fill="#c0a0ff"/>
<circle cx="598.6" cy="196.06" r="2.1" fill="#c0a0ff"/>
<circle cx="877.4" cy="196.06" r="2.1" fill="#c0a0ff"/>
<circle cx="602.9" cy="422.2" r="2.1" fill="#c0a0ff"/>
<circle cx="873.1" cy="422.2" r="2.1" fill="#c0a0ff"/>
<circle cx="596.6" cy="433.3" r="2.1" fill="#c0a0ff"/>
<circle cx="879.4" cy="433.3" r="2.1" fill="#c0a0ff"/>
<circle cx="738" cy="422.2" r="2.1" fill="#c0a0ff"/>
<circle cx="738" cy="422.2" r="2.1" fill="#c0a0ff"/>
<circle cx="738" cy="433.3" r="2.1" fill="#c0a0ff"/>
<circle cx="738" cy="433.3" r="2.1" fill="#c0a0ff"/>
<rect x="599.29" y="99.34" width="2.4" height="2.4" fill="#000" stroke="#c0a0ff" stroke-width="0.8"/>
<rect x="874.31" y="99.34" width="2.4" height="2.4" fill="#000" stroke="#c0a0ff" stroke-width="0.8"/>
<rect x="600.23" y="105.27" width="2.4" height="2.4" fill="#000" stroke="#c0a0ff" stroke-width="0.8"/>
<rect x="873.37" y="105.27" width="2.4" height="2.4" fill="#000" stroke="#c0a0ff" stroke-width="0.8"/>
<rect x="601.17" y="111.2" width="2.4" height="2.4" fill="#000" stroke="#c0a0ff" stroke-width="0.8"/>
<rect x="872.43" y="111.2" width="2.4" height="2.4" fill="#000" stroke="#c0a0ff" stroke-width="0.8"/>
<rect x="602.11" y="117.12" width="2.4" height="2.4" fill="#000" stroke="#c0a0ff" stroke-width="0.8"/>
<rect x="871.49" y="117.12" width="2.4" height="2.4" fill="#000" stroke="#c0a0ff" stroke-width="0.8"/>
<rect x="603.04" y="123.05" width="2.4" height="2.4" fill="#000" stroke="#c0a0ff" stroke-width="0.8"/>
<rect x="870.56" y="123.05" width="2.4" height="2.4" fill="#000" stroke="#c0a0ff" stroke-width="0.8"/>
<rect x="604.04" y="128.97" width="2.4" height="2.4" fill="#000" stroke="#c0a0ff" stroke-width="0.8"/>
<rect x="869.56" y="128.97" width="2.4" height="2.4" fill="#000" stroke="#c0a0ff" stroke-width="0.8"/>
<rect x="605.14" y="134.86" width="2.4" height="2.4" fill="#000" stroke="#c0a0ff" stroke-width="0.8"/>
<rect x="868.46" y="134.86" width="2.4" height="2.4" fill="#000" stroke="#c0a0ff" stroke-width="0.8"/>
<rect x="605.96" y="140.8" width="2.4" height="2.4" fill="#000" stroke="#c0a0ff" stroke-width="0.8"/>
<rect x="867.64" y="140.8" width="2.4" height="2.4" fill="#000" stroke="#c0a0ff" stroke-width="0.8"/>
<rect x="606.63" y="146.77" width="2.4" height="2.4" fill="#000" stroke="#c0a0ff" stroke-width="0.8"/>
<rect x="866.97" y="146.77" width="2.4" height="2.4" fill="#000" stroke="#c0a0ff" stroke-width="0.8"/>
<rect x="607.3" y="152.73" width="2.4" height="2.4" fill="#000" stroke="#c0a0ff" stroke-width="0.8"/>
<rect x="866.3" y="152.73" width="2.4" height="2.4" fill="#000" stroke="#c0a0ff" stroke-width="0.8"/>
<rect x="607.97" y="158.69" width="2.4" height="2.4" fill="#000" stroke="#c0a0ff" stroke-width="0.8"/>
<rect x="865.63" y="158.69" width="2.4" height="2.4" fill="#000" stroke="#c0a0ff" stroke-width="0.8"/>
<rect x="607.89" y="164.65" width="2.4" height="2.4" fill="#000" stroke="#c0a0ff" stroke-width="0.8"/>
<rect x="865.71" y="164.65" width="2.4" height="2.4" fill="#000" stroke="#c0a0ff" stroke-width="0.8"/>
<rect x="607.11" y="170.6" width="2.4" height="2.4" fill="#000" stroke="#c0a0ff" stroke-width="0.8"/>
<rect x="866.49" y="170.6" width="2.4" height="2.4" fill="#000" stroke="#c0a0ff" stroke-width="0.8"/>
<rect x="605.93" y="176.47" width="2.4" height="2.4" fill="#000" stroke="#c0a0ff" stroke-width="0.8"/>
<rect x="867.67" y="176.47" width="2.4" height="2.4" fill="#000" stroke="#c0a0ff" stroke-width="0.8"/>
<rect x="604.49" y="182.28" width="2.4" height="2.4" fill="#000" stroke="#c0a0ff" stroke-width="0.8"/>
<rect x="869.11" y="182.28" width="2.4" height="2.4" fill="#000" stroke="#c0a0ff" stroke-width="0.8"/>
<rect x="601.55" y="187.51" width="2.4" height="2.4" fill="#000" stroke="#c0a0ff" stroke-width="0.8"/>
<rect x="872.05" y="187.51" width="2.4" height="2.4" fill="#000" stroke="#c0a0ff" stroke-width="0.8"/>
<rect x="598.6" y="192.73" width="2.4" height="2.4" fill="#000" stroke="#c0a0ff" stroke-width="0.8"/>
<rect x="875" y="192.73" width="2.4" height="2.4" fill="#000" stroke="#c0a0ff" stroke-width="0.8"/>
<rect x="605.22" y="107.46" width="2.2" height="2.2" fill="#c0a0ff" stroke="#c0a0ff" stroke-width="0.8"/>
<rect x="868.58" y="107.46" width="2.2" height="2.2" fill="#c0a0ff" stroke="#c0a0ff" stroke-width="0.8"/>
<rect x="606.94" y="118.33" width="2.2" height="2.2" fill="#c0a0ff" stroke="#c0a0ff" stroke-width="0.8"/>
<rect x="866.86" y="118.33" width="2.2" height="2.2" fill="#c0a0ff" stroke="#c0a0ff" stroke-width="0.8"/>
<rect x="608.74" y="129.18" width="2.2" height="2.2" fill="#c0a0ff" stroke="#c0a0ff" stroke-width="0.8"/>
<rect x="865.06" y="129.18" width="2.2" height="2.2" fill="#c0a0ff" stroke="#c0a0ff" stroke-width="0.8"/>
<rect x="610.49" y="140.03" width="2.2" height="2.2" fill="#c0a0ff" stroke="#c0a0ff" stroke-width="0.8"/>
<rect x="863.31" y="140.03" width="2.2" height="2.2" fill="#c0a0ff" stroke="#c0a0ff" stroke-width="0.8"/>
<rect x="611.72" y="150.96" width="2.2" height="2.2" fill="#c0a0ff" stroke="#c0a0ff" stroke-width="0.8"/>
<rect x="862.08" y="150.96" width="2.2" height="2.2" fill="#c0a0ff" stroke="#c0a0ff" stroke-width="0.8"/>
<rect x="612.9" y="161.89" width="2.2" height="2.2" fill="#c0a0ff" stroke="#c0a0ff" stroke-width="0.8"/>
<rect x="860.9" y="161.89" width="2.2" height="2.2" fill="#c0a0ff" stroke="#c0a0ff" stroke-width="0.8"/>
<rect x="611.46" y="172.8" width="2.2" height="2.2" fill="#c0a0ff" stroke="#c0a0ff" stroke-width="0.8"/>
<rect x="862.34" y="172.8" width="2.2" height="2.2" fill="#c0a0ff" stroke="#c0a0ff" stroke-width="0.8"/>
<rect x="609.1" y="183.54" width="2.2" height="2.2" fill="#c0a0ff" stroke="#c0a0ff" stroke-width="0.8"/>
<rect x="864.7" y="183.54" width="2.2" height="2.2" fill="#c0a0ff" stroke="#c0a0ff" stroke-width="0.8"/>
<rect x="602.79" y="192.53" width="2.2" height="2.2" fill="#c0a0ff" stroke="#c0a0ff" stroke-width="0.8"/>
<rect x="871.01" y="192.53" width="2.2" height="2.2" fill="#c0a0ff" stroke="#c0a0ff" stroke-width="0.8"/>
<rect x="626.38" y="88.01" width="2.2" height="2.2" fill="#000" stroke="#c0a0ff" stroke-width="0.8"/>
<rect x="847.42" y="88.01" width="2.2" height="2.2" fill="#000" stroke="#c0a0ff" stroke-width="0.8"/>
<rect x="621.48" y="88.98" width="2.2" height="2.2" fill="#000" stroke="#c0a0ff" stroke-width="0.8"/>
<rect x="852.32" y="88.98" width="2.2" height="2.2" fill="#000" stroke="#c0a0ff" stroke-width="0.8"/>
<rect x="616.57" y="89.94" width="2.2" height="2.2" fill="#000" stroke="#c0a0ff" stroke-width="0.8"/>
<rect x="857.23" y="89.94" width="2.2" height="2.2" fill="#000" stroke="#c0a0ff" stroke-width="0.8"/>
<rect x="611.67" y="90.91" width="2.2" height="2.2" fill="#000" stroke="#c0a0ff" stroke-width="0.8"/>
<rect x="862.13" y="90.91" width="2.2" height="2.2" fill="#000" stroke="#c0a0ff" stroke-width="0.8"/>
<rect x="606.76" y="91.88" width="2.2" height="2.2" fill="#000" stroke="#c0a0ff" stroke-width="0.8"/>
<rect x="867.04" y="91.88" width="2.2" height="2.2" fill="#000" stroke="#c0a0ff" stroke-width="0.8"/>
<rect x="601.86" y="92.85" width="2.2" height="2.2" fill="#000" stroke="#c0a0ff" stroke-width="0.8"/>
<rect x="871.94" y="92.85" width="2.2" height="2.2" fill="#000" stroke="#c0a0ff" stroke-width="0.8"/>
<circle cx="670.5" cy="422.2" r="2.0" fill="#c0a0ff"/>
<circle cx="804.5" cy="422.2" r="2.0" fill="#c0a0ff"/>
<circle cx="737.5" cy="422.2" r="2.5" fill="#c0a0ff"/>
<circle cx="670.5" cy="433.3" r="2.0" fill="#c0a0ff"/>
<circle cx="804.5" cy="433.3" r="2.0" fill="#c0a0ff"/>
<circle cx="737.5" cy="433.3" r="2.5" fill="#c0a0ff"/>
<circle cx="738" cy="126.7" r="2.1" fill="#40b040"/>
<circle cx="738" cy="126.7" r="2.1" fill="#40b040"/>
<circle cx="738.76" cy="122.77" r="2.1" fill="#40b040"/>
<circle cx="737.24" cy="122.77" r="2.1" fill="#40b040"/>
<circle cx="693.3" cy="80.2" r="2.1" fill="#40b040"/>
<circle cx="782.7" cy="80.2" r="2.1" fill="#40b040"/>
<circle cx="696.15" cy="75.52" r="2.1" fill="#40b040"/>
<circle cx="779.85" cy="75.52" r="2.1" fill="#40b040"/>
<circle cx="609.2" cy="97.7" r="2.1" fill="#40b040"/>
<circle cx="866.8" cy="97.7" r="2.1" fill="#40b040"/>
<circle cx="604.01" cy="94.69" r="2.1" fill="#40b040"/>
<circle cx="871.99" cy="94.69" r="2.1" fill="#40b040"/>
<circle cx="611.4" cy="192.4" r="2.1" fill="#40b040"/>
<circle cx="864.6" cy="192.4" r="2.1" fill="#40b040"/>
<circle cx="607.6" cy="192.89" r="2.1" fill="#40b040"/>
<circle cx="868.4" cy="192.89" r="2.1" fill="#40b040"/>
<circle cx="611.4" cy="408.9" r="2.1" fill="#40b040"/>
<circle cx="864.6" cy="408.9" r="2.1" fill="#40b040"/>
<circle cx="605.6" cy="419.6" r="2.1" fill="#40b040"/>
<circle cx="870.4" cy="419.6" r="2.1" fill="#40b040"/>
<circle cx="738" cy="408.9" r="2.1" fill="#40b040"/>
<circle cx="738" cy="408.9" r="2.1" fill="#40b040"/>
<circle cx="738" cy="419.6" r="2.1" fill="#40b040"/>
<circle cx="738" cy="419.6" r="2.1" fill="#40b040"/>
<rect x="604.97" y="104.28" width="2.4" height="2.4" fill="#000" stroke="#40b040" stroke-width="0.8"/>
<rect x="868.63" y="104.28" width="2.4" height="2.4" fill="#000" stroke="#40b040" stroke-width="0.8"/>
<rect x="607.13" y="115.07" width="2.4" height="2.4" fill="#000" stroke="#40b040" stroke-width="0.8"/>
<rect x="866.47" y="115.07" width="2.4" height="2.4" fill="#000" stroke="#40b040" stroke-width="0.8"/>
<rect x="609.3" y="125.85" width="2.4" height="2.4" fill="#000" stroke="#40b040" stroke-width="0.8"/>
<rect x="864.3" y="125.85" width="2.4" height="2.4" fill="#000" stroke="#40b040" stroke-width="0.8"/>
<rect x="611.9" y="136.53" width="2.4" height="2.4" fill="#000" stroke="#40b040" stroke-width="0.8"/>
<rect x="861.7" y="136.53" width="2.4" height="2.4" fill="#000" stroke="#40b040" stroke-width="0.8"/>
<rect x="613.39" y="147.43" width="2.4" height="2.4" fill="#000" stroke="#40b040" stroke-width="0.8"/>
<rect x="860.21" y="147.43" width="2.4" height="2.4" fill="#000" stroke="#40b040" stroke-width="0.8"/>
<rect x="614.87" y="158.33" width="2.4" height="2.4" fill="#000" stroke="#40b040" stroke-width="0.8"/>
<rect x="858.73" y="158.33" width="2.4" height="2.4" fill="#000" stroke="#40b040" stroke-width="0.8"/>
<rect x="614.38" y="169.28" width="2.4" height="2.4" fill="#000" stroke="#40b040" stroke-width="0.8"/>
<rect x="859.22" y="169.28" width="2.4" height="2.4" fill="#000" stroke="#40b040" stroke-width="0.8"/>
<rect x="612.44" y="180.09" width="2.4" height="2.4" fill="#000" stroke="#40b040" stroke-width="0.8"/>
<rect x="861.16" y="180.09" width="2.4" height="2.4" fill="#000" stroke="#40b040" stroke-width="0.8"/>
<rect x="607.36" y="189.85" width="2.4" height="2.4" fill="#000" stroke="#40b040" stroke-width="0.8"/>
<rect x="866.24" y="189.85" width="2.4" height="2.4" fill="#000" stroke="#40b040" stroke-width="0.8"/>
<rect x="610.26" y="107.39" width="2.2" height="2.2" fill="#40b040" stroke="#40b040" stroke-width="0.8"/>
<rect x="863.54" y="107.39" width="2.2" height="2.2" fill="#40b040" stroke="#40b040" stroke-width="0.8"/>
<rect x="612.43" y="118.17" width="2.2" height="2.2" fill="#40b040" stroke="#40b040" stroke-width="0.8"/>
<rect x="861.37" y="118.17" width="2.2" height="2.2" fill="#40b040" stroke="#40b040" stroke-width="0.8"/>
<rect x="614.75" y="128.92" width="2.2" height="2.2" fill="#40b040" stroke="#40b040" stroke-width="0.8"/>
<rect x="859.05" y="128.92" width="2.2" height="2.2" fill="#40b040" stroke="#40b040" stroke-width="0.8"/>
<rect x="616.96" y="139.68" width="2.2" height="2.2" fill="#40b040" stroke="#40b040" stroke-width="0.8"/>
<rect x="856.84" y="139.68" width="2.2" height="2.2" fill="#40b040" stroke="#40b040" stroke-width="0.8"/>
<rect x="618.44" y="150.58" width="2.2" height="2.2" fill="#40b040" stroke="#40b040" stroke-width="0.8"/>
<rect x="855.36" y="150.58" width="2.2" height="2.2" fill="#40b040" stroke="#40b040" stroke-width="0.8"/>
<rect x="619.65" y="161.48" width="2.2" height="2.2" fill="#40b040" stroke="#40b040" stroke-width="0.8"/>
<rect x="854.15" y="161.48" width="2.2" height="2.2" fill="#40b040" stroke="#40b040" stroke-width="0.8"/>
<rect x="618.59" y="172.43" width="2.2" height="2.2" fill="#40b040" stroke="#40b040" stroke-width="0.8"/>
<rect x="855.21" y="172.43" width="2.2" height="2.2" fill="#40b040" stroke="#40b040" stroke-width="0.8"/>
<rect x="616.01" y="182.99" width="2.2" height="2.2" fill="#40b040" stroke="#40b040" stroke-width="0.8"/>
<rect x="857.79" y="182.99" width="2.2" height="2.2" fill="#40b040" stroke="#40b040" stroke-width="0.8"/>
<rect x="631.41" y="87.66" width="2.2" height="2.2" fill="#000" stroke="#40b040" stroke-width="0.8"/>
<rect x="842.39" y="87.66" width="2.2" height="2.2" fill="#000" stroke="#40b040" stroke-width="0.8"/>
<rect x="626.52" y="88.68" width="2.2" height="2.2" fill="#000" stroke="#40b040" stroke-width="0.8"/>
<rect x="847.28" y="88.68" width="2.2" height="2.2" fill="#000" stroke="#40b040" stroke-width="0.8"/>
<rect x="621.62" y="89.7" width="2.2" height="2.2" fill="#000" stroke="#40b040" stroke-width="0.8"/>
<rect x="852.18" y="89.7" width="2.2" height="2.2" fill="#000" stroke="#40b040" stroke-width="0.8"/>
<rect x="616.73" y="90.72" width="2.2" height="2.2" fill="#000" stroke="#40b040" stroke-width="0.8"/>
<rect x="857.07" y="90.72" width="2.2" height="2.2" fill="#000" stroke="#40b040" stroke-width="0.8"/>
<rect x="611.83" y="91.74" width="2.2" height="2.2" fill="#000" stroke="#40b040" stroke-width="0.8"/>
<rect x="861.97" y="91.74" width="2.2" height="2.2" fill="#000" stroke="#40b040" stroke-width="0.8"/>
<rect x="606.94" y="92.76" width="2.2" height="2.2" fill="#000" stroke="#40b040" stroke-width="0.8"/>
<rect x="866.86" y="92.76" width="2.2" height="2.2" fill="#000" stroke="#40b040" stroke-width="0.8"/>
<circle cx="674.5" cy="408.9" r="2.0" fill="#40b040"/>
<circle cx="800.5" cy="408.9" r="2.0" fill="#40b040"/>
<circle cx="737.5" cy="408.9" r="2.5" fill="#40b040"/>
<circle cx="674.5" cy="419.6" r="2.0" fill="#40b040"/>
<circle cx="800.5" cy="419.6" r="2.0" fill="#40b040"/>
<circle cx="737.5" cy="419.6" r="2.5" fill="#40b040"/>
<circle cx="738" cy="126.7" r="2.1" fill="#f0f070"/>
<circle cx="738" cy="126.7" r="2.1" fill="#f0f070"/>
<circle cx="738.76" cy="122.77" r="2.1" fill="#f0f070"/>
<circle cx="737.24" cy="122.77" r="2.1" fill="#f0f070"/>
<circle cx="693.3" cy="80.2" r="2.1" fill="#f0f070"/>
<circle cx="782.7" cy="80.2" r="2.1" fill="#f0f070"/>
<circle cx="696.13" cy="75.46" r="2.1" fill="#f0f070"/>
<circle cx="779.87" cy="75.46" r="2.1" fill="#f0f070"/>
<circle cx="615.4" cy="97.7" r="2.1" fill="#f0f070"/>
<circle cx="860.6" cy="97.7" r="2.1" fill="#f0f070"/>
<circle cx="610.23" cy="94.76" r="2.1" fill="#f0f070"/>
<circle cx="865.77" cy="94.76" r="2.1" fill="#f0f070"/>
<circle cx="616.6" cy="188.9" r="2.1" fill="#f0f070"/>
<circle cx="859.4" cy="188.9" r="2.1" fill="#f0f070"/>
<circle cx="611.9" cy="190.39" r="2.1" fill="#f0f070"/>
<circle cx="864.1" cy="190.39" r="2.1" fill="#f0f070"/>
<circle cx="616.6" cy="395.5" r="2.1" fill="#f0f070"/>
<circle cx="859.4" cy="395.5" r="2.1" fill="#f0f070"/>
<circle cx="609.9" cy="406.5" r="2.1" fill="#f0f070"/>
<circle cx="866.1" cy="406.5" r="2.1" fill="#f0f070"/>
<circle cx="738" cy="395.5" r="2.1" fill="#f0f070"/>
<circle cx="738" cy="395.5" r="2.1" fill="#f0f070"/>
<circle cx="738" cy="406.5" r="2.1" fill="#f0f070"/>
<circle cx="738" cy="406.5" r="2.1" fill="#f0f070"/>
<rect x="611.16" y="104.35" width="2.4" height="2.4" fill="#000" stroke="#f0f070" stroke-width="0.8"/>
<rect x="862.44" y="104.35" width="2.4" height="2.4" fill="#000" stroke="#f0f070" stroke-width="0.8"/>
<rect x="613.3" y="115.14" width="2.4" height="2.4" fill="#000" stroke="#f0f070" stroke-width="0.8"/>
<rect x="860.3" y="115.14" width="2.4" height="2.4" fill="#000" stroke="#f0f070" stroke-width="0.8"/>
<rect x="615.45" y="125.93" width="2.4" height="2.4" fill="#000" stroke="#f0f070" stroke-width="0.8"/>
<rect x="858.15" y="125.93" width="2.4" height="2.4" fill="#000" stroke="#f0f070" stroke-width="0.8"/>
<rect x="617.88" y="136.65" width="2.4" height="2.4" fill="#000" stroke="#f0f070" stroke-width="0.8"/>
<rect x="855.72" y="136.65" width="2.4" height="2.4" fill="#000" stroke="#f0f070" stroke-width="0.8"/>
<rect x="619.34" y="147.55" width="2.4" height="2.4" fill="#000" stroke="#f0f070" stroke-width="0.8"/>
<rect x="854.26" y="147.55" width="2.4" height="2.4" fill="#000" stroke="#f0f070" stroke-width="0.8"/>
<rect x="620.73" y="158.45" width="2.4" height="2.4" fill="#000" stroke="#f0f070" stroke-width="0.8"/>
<rect x="852.87" y="158.45" width="2.4" height="2.4" fill="#000" stroke="#f0f070" stroke-width="0.8"/>
<rect x="619.45" y="169.37" width="2.4" height="2.4" fill="#000" stroke="#f0f070" stroke-width="0.8"/>
<rect x="854.15" y="169.37" width="2.4" height="2.4" fill="#000" stroke="#f0f070" stroke-width="0.8"/>
<rect x="616.19" y="179.74" width="2.4" height="2.4" fill="#000" stroke="#f0f070" stroke-width="0.8"/>
<rect x="857.41" y="179.74" width="2.4" height="2.4" fill="#000" stroke="#f0f070" stroke-width="0.8"/>
<rect x="616.43" y="107.39" width="2.2" height="2.2" fill="#f0f070" stroke="#f0f070" stroke-width="0.8"/>
<rect x="857.37" y="107.39" width="2.2" height="2.2" fill="#f0f070" stroke="#f0f070" stroke-width="0.8"/>
<rect x="618.56" y="118.18" width="2.2" height="2.2" fill="#f0f070" stroke="#f0f070" stroke-width="0.8"/>
<rect x="855.24" y="118.18" width="2.2" height="2.2" fill="#f0f070" stroke="#f0f070" stroke-width="0.8"/>
<rect x="620.92" y="128.92" width="2.2" height="2.2" fill="#f0f070" stroke="#f0f070" stroke-width="0.8"/>
<rect x="852.88" y="128.92" width="2.2" height="2.2" fill="#f0f070" stroke="#f0f070" stroke-width="0.8"/>
<rect x="622.92" y="139.72" width="2.2" height="2.2" fill="#f0f070" stroke="#f0f070" stroke-width="0.8"/>
<rect x="850.88" y="139.72" width="2.2" height="2.2" fill="#f0f070" stroke="#f0f070" stroke-width="0.8"/>
<rect x="624.37" y="150.63" width="2.2" height="2.2" fill="#f0f070" stroke="#f0f070" stroke-width="0.8"/>
<rect x="849.43" y="150.63" width="2.2" height="2.2" fill="#f0f070" stroke="#f0f070" stroke-width="0.8"/>
<rect x="625.05" y="161.54" width="2.2" height="2.2" fill="#f0f070" stroke="#f0f070" stroke-width="0.8"/>
<rect x="848.75" y="161.54" width="2.2" height="2.2" fill="#f0f070" stroke="#f0f070" stroke-width="0.8"/>
<rect x="623.55" y="172.43" width="2.2" height="2.2" fill="#f0f070" stroke="#f0f070" stroke-width="0.8"/>
<rect x="850.25" y="172.43" width="2.2" height="2.2" fill="#f0f070" stroke="#f0f070" stroke-width="0.8"/>
<rect x="619.51" y="182.38" width="2.2" height="2.2" fill="#f0f070" stroke="#f0f070" stroke-width="0.8"/>
<rect x="854.29" y="182.38" width="2.2" height="2.2" fill="#f0f070" stroke="#f0f070" stroke-width="0.8"/>
<rect x="636.49" y="87.51" width="2.2" height="2.2" fill="#000" stroke="#f0f070" stroke-width="0.8"/>
<rect x="837.31" y="87.51" width="2.2" height="2.2" fill="#000" stroke="#f0f070" stroke-width="0.8"/>
<rect x="631.61" y="88.61" width="2.2" height="2.2" fill="#000" stroke="#f0f070" stroke-width="0.8"/>
<rect x="842.19" y="88.61" width="2.2" height="2.2" fill="#000" stroke="#f0f070" stroke-width="0.8"/>
<rect x="626.74" y="89.71" width="2.2" height="2.2" fill="#000" stroke="#f0f070" stroke-width="0.8"/>
<rect x="847.06" y="89.71" width="2.2" height="2.2" fill="#000" stroke="#f0f070" stroke-width="0.8"/>
<rect x="621.86" y="90.8" width="2.2" height="2.2" fill="#000" stroke="#f0f070" stroke-width="0.8"/>
<rect x="851.94" y="90.8" width="2.2" height="2.2" fill="#000" stroke="#f0f070" stroke-width="0.8"/>
<rect x="616.98" y="91.9" width="2.2" height="2.2" fill="#000" stroke="#f0f070" stroke-width="0.8"/>
<rect x="856.82" y="91.9" width="2.2" height="2.2" fill="#000" stroke="#f0f070" stroke-width="0.8"/>
<rect x="612.1" y="92.99" width="2.2" height="2.2" fill="#000" stroke="#f0f070" stroke-width="0.8"/>
<rect x="861.7" y="92.99" width="2.2" height="2.2" fill="#000" stroke="#f0f070" stroke-width="0.8"/>
<circle cx="676.2" cy="395.5" r="2.0" fill="#f0f070"/>
<circle cx="798.8" cy="395.5" r="2.0" fill="#f0f070"/>
<circle cx="737.5" cy="395.5" r="2.5" fill="#f0f070"/>
<circle cx="676.2" cy="406.5" r="2.0" fill="#f0f070"/>
<circle cx="798.8" cy="406.5" r="2.0" fill="#f0f070"/>
<circle cx="737.5" cy="406.5" r="2.5" fill="#f0f070"/>
<circle cx="738" cy="126.7" r="2.1" fill="#ffffff"/>
<circle cx="738" cy="126.7" r="2.1" fill="#ffffff"/>
<circle cx="738.76" cy="122.77" r="2.1" fill="#ffffff"/>
<circle cx="737.24" cy="122.77" r="2.1" fill="#ffffff"/>
<circle cx="693.3" cy="80.2" r="2.1" fill="#ffffff"/>
<circle cx="782.7" cy="80.2" r="2.1" fill="#ffffff"/>
<circle cx="696.12" cy="75.43" r="2.1" fill="#ffffff"/>
<circle cx="779.88" cy="75.43" r="2.1" fill="#ffffff"/>
<circle cx="619.8" cy="97.5" r="2.1" fill="#ffffff"/>
<circle cx="856.2" cy="97.5" r="2.1" fill="#ffffff"/>
<circle cx="614.63" cy="94.61" r="2.1" fill="#ffffff"/>
<circle cx="861.37" cy="94.61" r="2.1" fill="#ffffff"/>
<circle cx="620.5" cy="185" r="2.1" fill="#ffffff"/>
<circle cx="855.5" cy="185" r="2.1" fill="#ffffff"/>
<circle cx="616.4" cy="185.45" r="2.1" fill="#ffffff"/>
<circle cx="859.6" cy="185.45" r="2.1" fill="#ffffff"/>
<circle cx="620.5" cy="386.3" r="2.1" fill="#ffffff"/>
<circle cx="855.5" cy="386.3" r="2.1" fill="#ffffff"/>
<circle cx="614.4" cy="398.4" r="2.1" fill="#ffffff"/>
<circle cx="861.6" cy="398.4" r="2.1" fill="#ffffff"/>
<circle cx="738" cy="386.3" r="2.1" fill="#ffffff"/>
<circle cx="738" cy="386.3" r="2.1" fill="#ffffff"/>
<circle cx="738" cy="398.4" r="2.1" fill="#ffffff"/>
<circle cx="738" cy="398.4" r="2.1" fill="#ffffff"/>
<rect x="615.59" y="104.19" width="2.4" height="2.4" fill="#000" stroke="#ffffff" stroke-width="0.8"/>
<rect x="858.01" y="104.19" width="2.4" height="2.4" fill="#000" stroke="#ffffff" stroke-width="0.8"/>
<rect x="617.75" y="114.98" width="2.4" height="2.4" fill="#000" stroke="#ffffff" stroke-width="0.8"/>
<rect x="855.85" y="114.98" width="2.4" height="2.4" fill="#000" stroke="#ffffff" stroke-width="0.8"/>
<rect x="619.99" y="125.75" width="2.4" height="2.4" fill="#000" stroke="#ffffff" stroke-width="0.8"/>
<rect x="853.61" y="125.75" width="2.4" height="2.4" fill="#000" stroke="#ffffff" stroke-width="0.8"/>
<rect x="622.28" y="136.49" width="2.4" height="2.4" fill="#000" stroke="#ffffff" stroke-width="0.8"/>
<rect x="851.32" y="136.49" width="2.4" height="2.4" fill="#000" stroke="#ffffff" stroke-width="0.8"/>
<rect x="623.74" y="147.39" width="2.4" height="2.4" fill="#000" stroke="#ffffff" stroke-width="0.8"/>
<rect x="849.86" y="147.39" width="2.4" height="2.4" fill="#000" stroke="#ffffff" stroke-width="0.8"/>
<rect x="624.58" y="158.3" width="2.4" height="2.4" fill="#000" stroke="#ffffff" stroke-width="0.8"/>
<rect x="849.02" y="158.3" width="2.4" height="2.4" fill="#000" stroke="#ffffff" stroke-width="0.8"/>
<rect x="622.88" y="169.15" width="2.4" height="2.4" fill="#000" stroke="#ffffff" stroke-width="0.8"/>
<rect x="850.72" y="169.15" width="2.4" height="2.4" fill="#000" stroke="#ffffff" stroke-width="0.8"/>
<rect x="618.4" y="179.04" width="2.4" height="2.4" fill="#000" stroke="#ffffff" stroke-width="0.8"/>
<rect x="855.2" y="179.04" width="2.4" height="2.4" fill="#000" stroke="#ffffff" stroke-width="0.8"/>
<rect x="620.86" y="107.19" width="2.2" height="2.2" fill="#ffffff" stroke="#ffffff" stroke-width="0.8"/>
<rect x="852.94" y="107.19" width="2.2" height="2.2" fill="#ffffff" stroke="#ffffff" stroke-width="0.8"/>
<rect x="623.01" y="117.97" width="2.2" height="2.2" fill="#ffffff" stroke="#ffffff" stroke-width="0.8"/>
<rect x="850.79" y="117.97" width="2.2" height="2.2" fill="#ffffff" stroke="#ffffff" stroke-width="0.8"/>
<rect x="625.47" y="128.69" width="2.2" height="2.2" fill="#ffffff" stroke="#ffffff" stroke-width="0.8"/>
<rect x="848.33" y="128.69" width="2.2" height="2.2" fill="#ffffff" stroke="#ffffff" stroke-width="0.8"/>
<rect x="627.32" y="139.52" width="2.2" height="2.2" fill="#ffffff" stroke="#ffffff" stroke-width="0.8"/>
<rect x="846.48" y="139.52" width="2.2" height="2.2" fill="#ffffff" stroke="#ffffff" stroke-width="0.8"/>
<rect x="628.77" y="150.42" width="2.2" height="2.2" fill="#ffffff" stroke="#ffffff" stroke-width="0.8"/>
<rect x="845.03" y="150.42" width="2.2" height="2.2" fill="#ffffff" stroke="#ffffff" stroke-width="0.8"/>
<rect x="628.88" y="161.34" width="2.2" height="2.2" fill="#ffffff" stroke="#ffffff" stroke-width="0.8"/>
<rect x="844.92" y="161.34" width="2.2" height="2.2" fill="#ffffff" stroke="#ffffff" stroke-width="0.8"/>
<rect x="626.96" y="172.16" width="2.2" height="2.2" fill="#ffffff" stroke="#ffffff" stroke-width="0.8"/>
<rect x="846.84" y="172.16" width="2.2" height="2.2" fill="#ffffff" stroke="#ffffff" stroke-width="0.8"/>
<rect x="621.4" y="181.38" width="2.2" height="2.2" fill="#ffffff" stroke="#ffffff" stroke-width="0.8"/>
<rect x="852.4" y="181.38" width="2.2" height="2.2" fill="#ffffff" stroke="#ffffff" stroke-width="0.8"/>
<rect x="641.49" y="86.93" width="2.2" height="2.2" fill="#000" stroke="#ffffff" stroke-width="0.8"/>
<rect x="832.31" y="86.93" width="2.2" height="2.2" fill="#000" stroke="#ffffff" stroke-width="0.8"/>
<rect x="636.62" y="88.07" width="2.2" height="2.2" fill="#000" stroke="#ffffff" stroke-width="0.8"/>
<rect x="837.18" y="88.07" width="2.2" height="2.2" fill="#000" stroke="#ffffff" stroke-width="0.8"/>
<rect x="631.75" y="89.22" width="2.2" height="2.2" fill="#000" stroke="#ffffff" stroke-width="0.8"/>
<rect x="842.05" y="89.22" width="2.2" height="2.2" fill="#000" stroke="#ffffff" stroke-width="0.8"/>
<rect x="626.88" y="90.36" width="2.2" height="2.2" fill="#000" stroke="#ffffff" stroke-width="0.8"/>
<rect x="846.92" y="90.36" width="2.2" height="2.2" fill="#000" stroke="#ffffff" stroke-width="0.8"/>
<rect x="622.02" y="91.51" width="2.2" height="2.2" fill="#000" stroke="#ffffff" stroke-width="0.8"/>
<rect x="851.78" y="91.51" width="2.2" height="2.2" fill="#000" stroke="#ffffff" stroke-width="0.8"/>
<rect x="617.15" y="92.66" width="2.2" height="2.2" fill="#000" stroke="#ffffff" stroke-width="0.8"/>
<rect x="856.65" y="92.66" width="2.2" height="2.2" fill="#000" stroke="#ffffff" stroke-width="0.8"/>
<circle cx="678.5" cy="386.3" r="2.0" fill="#ffffff"/>
<circle cx="796.5" cy="386.3" r="2.0" fill="#ffffff"/>
<circle cx="737.5" cy="386.3" r="2.5" fill="#ffffff"/>
<circle cx="678.5" cy="398.4" r="2.0" fill="#ffffff"/>
<circle cx="796.5" cy="398.4" r="2.0" fill="#ffffff"/>
<circle cx="737.5" cy="398.4" r="2.5" fill="#ffffff"/>
<circle cx="602.9" cy="350.2" r="2.1" fill="#c0a0ff"/>
<circle cx="873.1" cy="350.2" r="2.1" fill="#c0a0ff"/>
<circle cx="596.6" cy="350.2" r="2.1" fill="#c0a0ff"/>
<circle cx="879.4" cy="350.2" r="2.1" fill="#c0a0ff"/>
<circle cx="602.9" cy="369" r="2.1" fill="#c0a0ff"/>
<circle cx="873.1" cy="369" r="2.1" fill="#c0a0ff"/>
<circle cx="596.6" cy="369" r="2.1" fill="#c0a0ff"/>
<circle cx="879.4" cy="369" r="2.1" fill="#c0a0ff"/>
<circle cx="611.4" cy="337.7" r="2.1" fill="#40b040"/>
<circle cx="864.6" cy="337.7" r="2.1" fill="#40b040"/>
<circle cx="605.6" cy="337.7" r="2.1" fill="#40b040"/>
<circle cx="870.4" cy="337.7" r="2.1" fill="#40b040"/>
<circle cx="611.4" cy="355" r="2.1" fill="#40b040"/>
<circle cx="864.6" cy="355" r="2.1" fill="#40b040"/>
<circle cx="605.6" cy="355" r="2.1" fill="#40b040"/>
<circle cx="870.4" cy="355" r="2.1" fill="#40b040"/>
<circle cx="616.6" cy="326" r="2.1" fill="#f0f070"/>
<circle cx="859.4" cy="326" r="2.1" fill="#f0f070"/>
<circle cx="609.9" cy="326" r="2.1" fill="#f0f070"/>
<circle cx="866.1" cy="326" r="2.1" fill="#f0f070"/>
<circle cx="616.6" cy="342.4" r="2.1" fill="#f0f070"/>
<circle cx="859.4" cy="342.4" r="2.1" fill="#f0f070"/>
<circle cx="609.9" cy="342.4" r="2.1" fill="#f0f070"/>
<circle cx="866.1" cy="342.4" r="2.1" fill="#f0f070"/>
<circle cx="620.5" cy="316.5" r="2.1" fill="#ffffff"/>
<circle cx="855.5" cy="316.5" r="2.1" fill="#ffffff"/>
<circle cx="614.4" cy="316.5" r="2.1" fill="#ffffff"/>
<circle cx="861.6" cy="316.5" r="2.1" fill="#ffffff"/>
<circle cx="620.5" cy="333" r="2.1" fill="#ffffff"/>
<circle cx="855.5" cy="333" r="2.1" fill="#ffffff"/>
<circle cx="614.4" cy="333" r="2.1" fill="#ffffff"/>
<circle cx="861.6" cy="333" r="2.1" fill="#ffffff"/>
<line x1="796" y1="86" x2="809" y2="385" stroke="#c8c8c8" stroke-width="1"/>
<path d="M806.11 373.35 L809 385 L810.87 373.15" fill="none" stroke="#c8c8c8" stroke-width="1"/>
<path d="M798.89 97.65 L796 86 L794.13 97.85" fill="none" stroke="#c8c8c8" stroke-width="1"/>
<line x1="625" y1="172.2" x2="850" y2="172.2" stroke="#c8c8c8" stroke-width="1"/>
<path d="M838.24 174.58 L850 172.2 L838.24 169.82" fill="none" stroke="#c8c8c8" stroke-width="1"/>
<path d="M636.76 169.82 L625 172.2 L636.76 174.58" fill="none" stroke="#c8c8c8" stroke-width="1"/>
<line x1="785" y1="66" x2="859.4" y2="84.7" stroke="#e02020" stroke-width="1.6"/>
<path d="M804.87 68.32 L785 66 L803.6 73.35" fill="none" stroke="#e02020" stroke-width="1"/>
<path d="M839.53 82.38 L859.4 84.7 L840.8 77.35" fill="none" stroke="#e02020" stroke-width="1"/>
<line x1="785.5" y1="61" x2="783.5" y2="72" stroke="#e02020" stroke-width="1.4"/>
<line x1="861.5" y1="79" x2="859.5" y2="90" stroke="#e02020" stroke-width="1.4"/>
<text x="658" y="32" fill="#ffffff" font-size="10" text-anchor="middle" dominant-baseline="central" letter-spacing="0.15" font-family="Liberation Sans, sans-serif">2</text>
<text x="650.5" y="51" fill="#e0ecff" font-size="10" text-anchor="middle" dominant-baseline="central" letter-spacing="0.15" font-family="Liberation Sans, sans-serif">6</text>
<text x="654" y="51" fill="#e0ecff" font-size="10" text-anchor="middle" dominant-baseline="central" letter-spacing="0.15" font-family="Liberation Sans, sans-serif">4</text>
<text x="613" y="88" fill="#ffffff" font-size="10" text-anchor="middle" dominant-baseline="central" letter-spacing="0.15" font-family="Liberation Sans, sans-serif">12</text>
<text x="657" y="86" fill="#ffffff" font-size="10" text-anchor="middle" dominant-baseline="central" letter-spacing="0.15" font-family="Liberation Sans, sans-serif">16.72</text>
<rect x="642.5" y="83.6" width="29" height="12" fill="#000"/>
<text x="657" y="89.6" fill="#ffffff" font-size="10" text-anchor="middle" dominant-baseline="central" letter-spacing="0.15" font-family="Liberation Sans, sans-serif">17.12</text>
<text x="700" y="72" fill="#ffffff" font-size="10" text-anchor="middle" dominant-baseline="central" letter-spacing="0.15" font-family="Liberation Sans, sans-serif">13</text>
<rect x="693" y="106.7" width="28" height="12" fill="#000"/>
<text x="707" y="112.7" fill="#ffffff" font-size="10" text-anchor="middle" dominant-baseline="central" letter-spacing="0.15" font-family="Liberation Sans, sans-serif">15.78</text>
<rect x="753.5" y="106.7" width="28" height="12" fill="#000"/>
<text x="767.5" y="112.7" fill="#ffffff" font-size="10" text-anchor="middle" dominant-baseline="central" letter-spacing="0.15" font-family="Liberation Sans, sans-serif">15.78</text>
<text x="733" y="116" fill="#ffffff" font-size="10" text-anchor="middle" dominant-baseline="central" letter-spacing="0.15" font-family="Liberation Sans, sans-serif">14</text>
<text x="784" y="70" fill="#ffffff" font-size="10" text-anchor="middle" dominant-baseline="central" letter-spacing="0.15" font-family="Liberation Sans, sans-serif">1</text>
<rect x="806.5" y="70.3" width="31" height="12" fill="#000"/>
<text x="822" y="76.3" fill="#e02020" font-size="10" text-anchor="middle" dominant-baseline="central" letter-spacing="0.15" font-family="Liberation Sans, sans-serif">BAHU</text>
<text x="817.5" y="86" fill="#ffffff" font-size="10" text-anchor="middle" dominant-baseline="central" letter-spacing="0.15" font-family="Liberation Sans, sans-serif">16.72</text>
<rect x="805.5" y="83.6" width="29" height="12" fill="#000"/>
<text x="820" y="89.6" fill="#ffffff" font-size="10" text-anchor="middle" dominant-baseline="central" letter-spacing="0.15" font-family="Liberation Sans, sans-serif">17.12</text>
<rect x="613.3" y="136.4" width="30" height="12" fill="#000"/>
<text x="628.3" y="142.4" fill="#ffffff" font-size="10" text-anchor="middle" dominant-baseline="central" letter-spacing="0.15" font-family="Liberation Sans, sans-serif">20.72</text>
<rect x="832.5" y="136.2" width="30" height="12" fill="#000"/>
<text x="847.5" y="142.2" fill="#ffffff" font-size="10" text-anchor="middle" dominant-baseline="central" letter-spacing="0.15" font-family="Liberation Sans, sans-serif">20.72</text>
<rect x="692" y="166.2" width="91" height="12" fill="#000"/>
<text x="737.5" y="172.2" fill="#c8c8c8" font-size="10" text-anchor="middle" dominant-baseline="central" letter-spacing="0.15" font-family="Liberation Sans, sans-serif">LINGKAR DADA[2]</text>
<rect x="730" y="179.6" width="15" height="12" fill="#000"/>
<text x="737.5" y="185.6" fill="#ffffff" font-size="10" text-anchor="middle" dominant-baseline="central" letter-spacing="0.15" font-family="Liberation Sans, sans-serif">53</text>
<text x="750" y="185.2" fill="#ffffff" font-size="10" text-anchor="middle" dominant-baseline="central" letter-spacing="0.15" font-family="Liberation Sans, sans-serif">S1</text>
<rect x="605.5" y="245.2" width="30" height="12" fill="#000"/>
<text x="620.5" y="251.2" fill="#ffffff" font-size="10" text-anchor="middle" dominant-baseline="central" letter-spacing="0.15" font-family="Liberation Sans, sans-serif">29.67</text>
<rect x="840" y="245.2" width="30" height="12" fill="#000"/>
<text x="855" y="251.2" fill="#ffffff" font-size="10" text-anchor="middle" dominant-baseline="central" letter-spacing="0.15" font-family="Liberation Sans, sans-serif">29.67</text>
<rect x="758.3" y="227.2" width="88" height="12" fill="#000"/>
<text x="802.3" y="233.2" fill="#c8c8c8" font-size="10" text-anchor="middle" dominant-baseline="central" letter-spacing="0.15" font-family="Liberation Sans, sans-serif">PANJANG DEPAN</text>
<text x="722.2" y="253" fill="#ffffff" font-size="10.3" text-anchor="middle" dominant-baseline="central" font-family="Liberation Sans, sans-serif" transform="rotate(-90 722.2 253)">PB172</text>
<text x="732.4" y="251" fill="#ffffff" font-size="10.3" text-anchor="middle" dominant-baseline="central" font-family="Liberation Sans, sans-serif" transform="rotate(-90 732.4 251)">DEPAN</text>
<text x="742.4" y="254" fill="#ffffff" font-size="10.3" text-anchor="middle" dominant-baseline="central" font-family="Liberation Sans, sans-serif" transform="rotate(-90 742.4 254)">M,L,XL,XXL</text>
<text x="615" y="309" fill="#ffffff" font-size="10" text-anchor="middle" dominant-baseline="central" letter-spacing="0.15" font-family="Liberation Sans, sans-serif">10</text>
<rect x="603.5" y="319.1" width="28" height="12" fill="#000"/>
<text x="617.5" y="325.1" fill="#ffffff" font-size="10" text-anchor="middle" dominant-baseline="central" letter-spacing="0.15" font-family="Liberation Sans, sans-serif">3.399</text>
<rect x="845.5" y="319.1" width="28" height="12" fill="#000"/>
<text x="859.5" y="325.1" fill="#ffffff" font-size="10" text-anchor="middle" dominant-baseline="central" letter-spacing="0.15" font-family="Liberation Sans, sans-serif">3.899</text>
<text x="620" y="360.4" fill="#ffffff" font-size="10" text-anchor="middle" dominant-baseline="central" letter-spacing="0.15" font-family="Liberation Sans, sans-serif">12</text>
<text x="853" y="360.4" fill="#ffffff" font-size="10" text-anchor="middle" dominant-baseline="central" letter-spacing="0.15" font-family="Liberation Sans, sans-serif">12</text>
<rect x="666.7" y="380.3" width="23" height="12" fill="#000"/>
<text x="678.2" y="386.3" fill="#ffffff" font-size="10" text-anchor="middle" dominant-baseline="central" letter-spacing="0.15" font-family="Liberation Sans, sans-serif">26.5</text>
<rect x="784.7" y="380.3" width="23" height="12" fill="#000"/>
<text x="796.2" y="386.3" fill="#ffffff" font-size="10" text-anchor="middle" dominant-baseline="central" letter-spacing="0.15" font-family="Liberation Sans, sans-serif">26.5</text>
<rect x="669" y="396.2" width="14" height="6" fill="#000"/>
<text x="676" y="399.2" fill="#ffffff" font-size="10" text-anchor="middle" dominant-baseline="central" letter-spacing="0.15" font-family="Liberation Sans, sans-serif">28</text>
<rect x="791" y="396.2" width="14" height="6" fill="#000"/>
<text x="798" y="399.2" fill="#ffffff" font-size="10" text-anchor="middle" dominant-baseline="central" letter-spacing="0.15" font-family="Liberation Sans, sans-serif">28</text>
<text x="735" y="392" fill="#f0f0b0" font-size="10" text-anchor="middle" dominant-baseline="central" letter-spacing="0.15" font-family="Liberation Sans, sans-serif">7</text>
<text x="852" y="393" fill="#f0f0b0" font-size="10" text-anchor="middle" dominant-baseline="central" letter-spacing="0.15" font-family="Liberation Sans, sans-serif">6</text>
<text x="616" y="377" fill="#f0f0c0" font-size="10" text-anchor="middle" dominant-baseline="central" letter-spacing="0.15" font-family="Liberation Sans, sans-serif">8</text>
<line x1="651.5" y1="37.5" x2="860" y2="37.5" stroke="#ffffff" stroke-width="1" stroke-dasharray="4 3"/>
<line x1="655.7" y1="41.5" x2="855.5" y2="41.5" stroke="#ffffff" stroke-width="1"/>
<line x1="655.7" y1="59.5" x2="855.5" y2="59.5" stroke="#ffffff" stroke-width="1"/>
<line x1="651.5" y1="63.5" x2="860" y2="63.5" stroke="#ffffff" stroke-width="1" stroke-dasharray="4 3"/>
<circle cx="651.5" cy="37.5" r="2.5" fill="#ffffff"/>
<circle cx="655.7" cy="41.5" r="2.5" fill="#ffffff"/>
<circle cx="655.7" cy="59.5" r="2.5" fill="#ffffff"/>
<circle cx="651.5" cy="63.5" r="2.5" fill="#ffffff"/>
<circle cx="860" cy="37.5" r="2.5" fill="#ffffff"/>
<circle cx="855.5" cy="41.5" r="2.5" fill="#ffffff"/>
<circle cx="855.5" cy="59.5" r="2.5" fill="#ffffff"/>
<circle cx="860" cy="63.5" r="2.5" fill="#ffffff"/>
<line x1="864.3" y1="41.5" x2="864.3" y2="59.5" stroke="#c0a0ff" stroke-width="1"/>
<line x1="868.2" y1="37.5" x2="868.2" y2="63.5" stroke="#c0a0ff" stroke-width="1" stroke-dasharray="3 2"/>
<circle cx="864.3" cy="41.5" r="2.5" fill="#c0a0ff"/>
<circle cx="868.2" cy="37.5" r="2.5" fill="#c0a0ff"/>
<circle cx="864.3" cy="59.5" r="2.5" fill="#c0a0ff"/>
<circle cx="868.2" cy="63.5" r="2.5" fill="#c0a0ff"/>
<rect x="748" y="35.5" width="14" height="12" fill="#000"/>
<text x="755" y="41.5" fill="#ffffff" font-size="10" text-anchor="middle" dominant-baseline="central" letter-spacing="0.15" font-family="Liberation Sans, sans-serif">45</text>
<rect x="748" y="53.5" width="14" height="12" fill="#000"/>
<text x="755" y="59.5" fill="#ffffff" font-size="10" text-anchor="middle" dominant-baseline="central" letter-spacing="0.15" font-family="Liberation Sans, sans-serif">45</text>
<text x="750" y="51.7" fill="#ffffff" font-size="10.3" text-anchor="middle" dominant-baseline="central" font-family="Liberation Sans, sans-serif" transform="rotate(90 750 51.7)">M,L,XL,XXL</text>
<text x="770" y="52.7" fill="#ffffff" font-size="10.3" text-anchor="middle" dominant-baseline="central" font-family="Liberation Sans, sans-serif" transform="rotate(90 770 52.7)">PB172</text>
<text x="857" y="50" fill="#ffffff" font-size="10" text-anchor="middle" dominant-baseline="central" letter-spacing="0.15" font-family="Liberation Sans, sans-serif">48</text>
<text x="852" y="67" fill="#ffffff" font-size="10" text-anchor="middle" dominant-baseline="central" letter-spacing="0.15" font-family="Liberation Sans, sans-serif">4</text>
<rect x="585" y="348.5" width="18" height="4" rx="2" fill="#c0a0ff"/>
<path d="M975.95 105.03 L957.83 107.25 L939.94 113.72 L918.95 129.04 L899.81 140.97 L876.27 150.71 L904.8 290.2" fill="none" stroke="#c0a0ff" stroke-width="1" stroke-dasharray="4 3"/>
<path d="M977.05 105.03 L995.17 107.25 L1013.06 113.72 L1034.05 129.04 L1053.19 140.97 L1076.73 150.71 L1048.2 290.2" fill="none" stroke="#c0a0ff" stroke-width="1" stroke-dasharray="4 3"/>
<line x1="904.8" y1="290.2" x2="1048.2" y2="290.2" stroke="#c0a0ff" stroke-width="1"/>
<path d="M976.5 109.5 L958.88 111.65 L942.07 117.74 L921.47 132.77 L901.88 144.98 L880.1 154 L908.5 278.7 L976.5 278.7 L1044.5 278.7 L1072.9 154 L1051.12 144.98 L1031.53 132.77 L1010.93 117.74 L994.12 111.65 L976.5 109.5" fill="none" stroke="#c0a0ff" stroke-width="1"/>
<line x1="880.1" y1="154" x2="1072.9" y2="154" stroke="#c0a0ff" stroke-width="1"/>
<circle cx="880.1" cy="154" r="2.1" fill="#c0a0ff"/>
<circle cx="1072.9" cy="154" r="2.1" fill="#c0a0ff"/>
<circle cx="908.5" cy="278.7" r="2.1" fill="#c0a0ff"/>
<circle cx="1044.5" cy="278.7" r="2.1" fill="#c0a0ff"/>
<circle cx="876.27" cy="150.71" r="2.1" fill="#c0a0ff"/>
<circle cx="1076.73" cy="150.71" r="2.1" fill="#c0a0ff"/>
<circle cx="904.8" cy="290.2" r="2.1" fill="#c0a0ff"/>
<circle cx="1048.2" cy="290.2" r="2.1" fill="#c0a0ff"/>
<rect x="956.53" y="105.95" width="2.6" height="2.6" fill="#c0a0ff" stroke="#c0a0ff" stroke-width="0.8"/>
<rect x="993.87" y="105.95" width="2.6" height="2.6" fill="#c0a0ff" stroke="#c0a0ff" stroke-width="0.8"/>
<rect x="957.68" y="110.45" width="2.4" height="2.4" fill="#c0a0ff" stroke="#c0a0ff" stroke-width="0.8"/>
<rect x="992.92" y="110.45" width="2.4" height="2.4" fill="#c0a0ff" stroke="#c0a0ff" stroke-width="0.8"/>
<rect x="938.64" y="112.42" width="2.6" height="2.6" fill="#c0a0ff" stroke="#c0a0ff" stroke-width="0.8"/>
<rect x="1011.76" y="112.42" width="2.6" height="2.6" fill="#c0a0ff" stroke="#c0a0ff" stroke-width="0.8"/>
<rect x="940.87" y="116.54" width="2.4" height="2.4" fill="#c0a0ff" stroke="#c0a0ff" stroke-width="0.8"/>
<rect x="1009.73" y="116.54" width="2.4" height="2.4" fill="#c0a0ff" stroke="#c0a0ff" stroke-width="0.8"/>
<rect x="917.65" y="127.74" width="2.6" height="2.6" fill="#c0a0ff" stroke="#c0a0ff" stroke-width="0.8"/>
<rect x="1032.75" y="127.74" width="2.6" height="2.6" fill="#c0a0ff" stroke="#c0a0ff" stroke-width="0.8"/>
<rect x="920.27" y="131.57" width="2.4" height="2.4" fill="#c0a0ff" stroke="#c0a0ff" stroke-width="0.8"/>
<rect x="1030.33" y="131.57" width="2.4" height="2.4" fill="#c0a0ff" stroke="#c0a0ff" stroke-width="0.8"/>
<rect x="898.51" y="139.67" width="2.6" height="2.6" fill="#c0a0ff" stroke="#c0a0ff" stroke-width="0.8"/>
<rect x="1051.89" y="139.67" width="2.6" height="2.6" fill="#c0a0ff" stroke="#c0a0ff" stroke-width="0.8"/>
<rect x="900.68" y="143.78" width="2.4" height="2.4" fill="#c0a0ff" stroke="#c0a0ff" stroke-width="0.8"/>
<rect x="1049.92" y="143.78" width="2.4" height="2.4" fill="#c0a0ff" stroke="#c0a0ff" stroke-width="0.8"/>
<rect x="890.26" y="202.68" width="2.4" height="2.4" fill="#c0a0ff" stroke="#c0a0ff" stroke-width="0.8"/>
<rect x="1060.34" y="202.68" width="2.4" height="2.4" fill="#c0a0ff" stroke="#c0a0ff" stroke-width="0.8"/>
<rect x="886.48" y="205.31" width="2.4" height="2.4" fill="#c0a0ff" stroke="#c0a0ff" stroke-width="0.8"/>
<rect x="1064.12" y="205.31" width="2.4" height="2.4" fill="#c0a0ff" stroke="#c0a0ff" stroke-width="0.8"/>
<rect x="900.2" y="246.32" width="2.4" height="2.4" fill="#c0a0ff" stroke="#c0a0ff" stroke-width="0.8"/>
<rect x="1050.4" y="246.32" width="2.4" height="2.4" fill="#c0a0ff" stroke="#c0a0ff" stroke-width="0.8"/>
<rect x="896.47" y="254.13" width="2.4" height="2.4" fill="#c0a0ff" stroke="#c0a0ff" stroke-width="0.8"/>
<rect x="1054.13" y="254.13" width="2.4" height="2.4" fill="#c0a0ff" stroke="#c0a0ff" stroke-width="0.8"/>
<path d="M975.96 105.03 L957.88 107.23 L940.24 113.56 L919.98 128.51 L902.33 139.68 L881.23 148.17 L910.7 286.5" fill="none" stroke="#40b040" stroke-width="1" stroke-dasharray="4 3"/>
<path d="M977.04 105.03 L995.12 107.23 L1012.76 113.56 L1033.02 128.51 L1050.67 139.68 L1071.77 148.17 L1042.3 286.5" fill="none" stroke="#40b040" stroke-width="1" stroke-dasharray="4 3"/>
<line x1="910.7" y1="286.5" x2="1042.3" y2="286.5" stroke="#40b040" stroke-width="1"/>
<path d="M976.5 109.5 L958.92 111.63 L942.39 117.58 L922.53 132.23 L904.38 143.7 L885 151.5 L911 274.3 L976.5 274.3 L1042 274.3 L1068 151.5 L1048.62 143.7 L1030.47 132.23 L1010.61 117.58 L994.08 111.63 L976.5 109.5" fill="none" stroke="#40b040" stroke-width="1"/>
<line x1="885" y1="151.5" x2="1068" y2="151.5" stroke="#40b040" stroke-width="1"/>
<circle cx="885" cy="151.5" r="2.1" fill="#40b040"/>
<circle cx="1068" cy="151.5" r="2.1" fill="#40b040"/>
<circle cx="911" cy="274.3" r="2.1" fill="#40b040"/>
<circle cx="1042" cy="274.3" r="2.1" fill="#40b040"/>
<circle cx="881.23" cy="148.17" r="2.1" fill="#40b040"/>
<circle cx="1071.77" cy="148.17" r="2.1" fill="#40b040"/>
<circle cx="910.7" cy="286.5" r="2.1" fill="#40b040"/>
<circle cx="1042.3" cy="286.5" r="2.1" fill="#40b040"/>
<rect x="956.58" y="105.93" width="2.6" height="2.6" fill="#40b040" stroke="#40b040" stroke-width="0.8"/>
<rect x="993.82" y="105.93" width="2.6" height="2.6" fill="#40b040" stroke="#40b040" stroke-width="0.8"/>
<rect x="957.72" y="110.43" width="2.4" height="2.4" fill="#40b040" stroke="#40b040" stroke-width="0.8"/>
<rect x="992.88" y="110.43" width="2.4" height="2.4" fill="#40b040" stroke="#40b040" stroke-width="0.8"/>
<rect x="938.94" y="112.26" width="2.6" height="2.6" fill="#40b040" stroke="#40b040" stroke-width="0.8"/>
<rect x="1011.46" y="112.26" width="2.6" height="2.6" fill="#40b040" stroke="#40b040" stroke-width="0.8"/>
<rect x="941.19" y="116.38" width="2.4" height="2.4" fill="#40b040" stroke="#40b040" stroke-width="0.8"/>
<rect x="1009.41" y="116.38" width="2.4" height="2.4" fill="#40b040" stroke="#40b040" stroke-width="0.8"/>
<rect x="918.68" y="127.21" width="2.6" height="2.6" fill="#40b040" stroke="#40b040" stroke-width="0.8"/>
<rect x="1031.72" y="127.21" width="2.6" height="2.6" fill="#40b040" stroke="#40b040" stroke-width="0.8"/>
<rect x="921.33" y="131.03" width="2.4" height="2.4" fill="#40b040" stroke="#40b040" stroke-width="0.8"/>
<rect x="1029.27" y="131.03" width="2.4" height="2.4" fill="#40b040" stroke="#40b040" stroke-width="0.8"/>
<rect x="901.03" y="138.38" width="2.6" height="2.6" fill="#40b040" stroke="#40b040" stroke-width="0.8"/>
<rect x="1049.37" y="138.38" width="2.6" height="2.6" fill="#40b040" stroke="#40b040" stroke-width="0.8"/>
<rect x="903.18" y="142.5" width="2.4" height="2.4" fill="#40b040" stroke="#40b040" stroke-width="0.8"/>
<rect x="1047.42" y="142.5" width="2.4" height="2.4" fill="#40b040" stroke="#40b040" stroke-width="0.8"/>
<rect x="894.2" y="199.42" width="2.4" height="2.4" fill="#40b040" stroke="#40b040" stroke-width="0.8"/>
<rect x="1056.4" y="199.42" width="2.4" height="2.4" fill="#40b040" stroke="#40b040" stroke-width="0.8"/>
<rect x="891.82" y="202.3" width="2.4" height="2.4" fill="#40b040" stroke="#40b040" stroke-width="0.8"/>
<rect x="1058.78" y="202.3" width="2.4" height="2.4" fill="#40b040" stroke="#40b040" stroke-width="0.8"/>
<rect x="903.3" y="242.4" width="2.4" height="2.4" fill="#40b040" stroke="#40b040" stroke-width="0.8"/>
<rect x="1047.3" y="242.4" width="2.4" height="2.4" fill="#40b040" stroke="#40b040" stroke-width="0.8"/>
<rect x="902.13" y="250.72" width="2.4" height="2.4" fill="#40b040" stroke="#40b040" stroke-width="0.8"/>
<rect x="1048.47" y="250.72" width="2.4" height="2.4" fill="#40b040" stroke="#40b040" stroke-width="0.8"/>
<path d="M975.96 105.03 L957.93 107.2 L940.59 113.39 L921.14 127.93 L905.15 138.23 L886.8 145.3 L913.6 281.4" fill="none" stroke="#f0f070" stroke-width="1" stroke-dasharray="4 3"/>
<path d="M977.04 105.03 L995.07 107.2 L1012.41 113.39 L1031.86 127.93 L1047.85 138.23 L1066.2 145.3 L1039.4 281.4" fill="none" stroke="#f0f070" stroke-width="1" stroke-dasharray="4 3"/>
<line x1="913.6" y1="281.4" x2="1039.4" y2="281.4" stroke="#f0f070" stroke-width="1"/>
<path d="M976.5 109.5 L958.97 111.61 L942.74 117.4 L923.71 131.62 L907.2 142.27 L890.5 148.7 L913.5 269.3 L976.5 269.3 L1039.5 269.3 L1062.5 148.7 L1045.8 142.27 L1029.29 131.62 L1010.26 117.4 L994.03 111.61 L976.5 109.5" fill="none" stroke="#f0f070" stroke-width="1"/>
<line x1="890.5" y1="148.7" x2="1062.5" y2="148.7" stroke="#f0f070" stroke-width="1"/>
<circle cx="890.5" cy="148.7" r="2.1" fill="#f0f070"/>
<circle cx="1062.5" cy="148.7" r="2.1" fill="#f0f070"/>
<circle cx="913.5" cy="269.3" r="2.1" fill="#f0f070"/>
<circle cx="1039.5" cy="269.3" r="2.1" fill="#f0f070"/>
<circle cx="886.8" cy="145.3" r="2.1" fill="#f0f070"/>
<circle cx="1066.2" cy="145.3" r="2.1" fill="#f0f070"/>
<circle cx="913.6" cy="281.4" r="2.1" fill="#f0f070"/>
<circle cx="1039.4" cy="281.4" r="2.1" fill="#f0f070"/>
<rect x="956.63" y="105.9" width="2.6" height="2.6" fill="#f0f070" stroke="#f0f070" stroke-width="0.8"/>
<rect x="993.77" y="105.9" width="2.6" height="2.6" fill="#f0f070" stroke="#f0f070" stroke-width="0.8"/>
<rect x="957.77" y="110.41" width="2.4" height="2.4" fill="#f0f070" stroke="#f0f070" stroke-width="0.8"/>
<rect x="992.83" y="110.41" width="2.4" height="2.4" fill="#f0f070" stroke="#f0f070" stroke-width="0.8"/>
<rect x="939.29" y="112.09" width="2.6" height="2.6" fill="#f0f070" stroke="#f0f070" stroke-width="0.8"/>
<rect x="1011.11" y="112.09" width="2.6" height="2.6" fill="#f0f070" stroke="#f0f070" stroke-width="0.8"/>
<rect x="941.54" y="116.2" width="2.4" height="2.4" fill="#f0f070" stroke="#f0f070" stroke-width="0.8"/>
<rect x="1009.06" y="116.2" width="2.4" height="2.4" fill="#f0f070" stroke="#f0f070" stroke-width="0.8"/>
<rect x="919.84" y="126.63" width="2.6" height="2.6" fill="#f0f070" stroke="#f0f070" stroke-width="0.8"/>
<rect x="1030.56" y="126.63" width="2.6" height="2.6" fill="#f0f070" stroke="#f0f070" stroke-width="0.8"/>
<rect x="922.51" y="130.42" width="2.4" height="2.4" fill="#f0f070" stroke="#f0f070" stroke-width="0.8"/>
<rect x="1028.09" y="130.42" width="2.4" height="2.4" fill="#f0f070" stroke="#f0f070" stroke-width="0.8"/>
<rect x="903.85" y="136.93" width="2.6" height="2.6" fill="#f0f070" stroke="#f0f070" stroke-width="0.8"/>
<rect x="1046.55" y="136.93" width="2.6" height="2.6" fill="#f0f070" stroke="#f0f070" stroke-width="0.8"/>
<rect x="906" y="141.07" width="2.4" height="2.4" fill="#f0f070" stroke="#f0f070" stroke-width="0.8"/>
<rect x="1044.6" y="141.07" width="2.4" height="2.4" fill="#f0f070" stroke="#f0f070" stroke-width="0.8"/>
<rect x="898.5" y="195.74" width="2.4" height="2.4" fill="#f0f070" stroke="#f0f070" stroke-width="0.8"/>
<rect x="1052.1" y="195.74" width="2.4" height="2.4" fill="#f0f070" stroke="#f0f070" stroke-width="0.8"/>
<rect x="896.32" y="198.54" width="2.4" height="2.4" fill="#f0f070" stroke="#f0f070" stroke-width="0.8"/>
<rect x="1054.28" y="198.54" width="2.4" height="2.4" fill="#f0f070" stroke="#f0f070" stroke-width="0.8"/>
<rect x="906.55" y="237.95" width="2.4" height="2.4" fill="#f0f070" stroke="#f0f070" stroke-width="0.8"/>
<rect x="1044.05" y="237.95" width="2.4" height="2.4" fill="#f0f070" stroke="#f0f070" stroke-width="0.8"/>
<rect x="905.7" y="246.18" width="2.4" height="2.4" fill="#f0f070" stroke="#f0f070" stroke-width="0.8"/>
<rect x="1044.9" y="246.18" width="2.4" height="2.4" fill="#f0f070" stroke="#f0f070" stroke-width="0.8"/>
<path d="M975.96 105.03 L957.96 107.19 L940.83 113.3 L921.99 127.63 L907.21 137.48 L890.96 143.79 L914.6 277.7" fill="none" stroke="#ffffff" stroke-width="1" stroke-dasharray="4 3"/>
<path d="M977.04 105.03 L995.04 107.19 L1012.17 113.3 L1031.01 127.63 L1045.79 137.48 L1062.04 143.79 L1038.4 277.7" fill="none" stroke="#ffffff" stroke-width="1" stroke-dasharray="4 3"/>
<line x1="914.6" y1="277.7" x2="1038.4" y2="277.7" stroke="#ffffff" stroke-width="1"/>
<path d="M976.5 109.5 L959 111.6 L943 117.3 L924.6 131.3 L909.3 141.5 L894.6 147.2 L915.2 265.2 L976.5 265.2 L1037.8 265.2 L1058.4 147.2 L1043.7 141.5 L1028.4 131.3 L1010 117.3 L994 111.6 L976.5 109.5" fill="none" stroke="#ffffff" stroke-width="1"/>
<line x1="894.6" y1="147.2" x2="1058.4" y2="147.2" stroke="#ffffff" stroke-width="1"/>
<circle cx="894.6" cy="147.2" r="2.1" fill="#ffffff"/>
<circle cx="1058.4" cy="147.2" r="2.1" fill="#ffffff"/>
<circle cx="915.2" cy="265.2" r="2.1" fill="#ffffff"/>
<circle cx="1037.8" cy="265.2" r="2.1" fill="#ffffff"/>
<circle cx="890.96" cy="143.79" r="2.1" fill="#ffffff"/>
<circle cx="1062.04" cy="143.79" r="2.1" fill="#ffffff"/>
<circle cx="914.6" cy="277.7" r="2.1" fill="#ffffff"/>
<circle cx="1038.4" cy="277.7" r="2.1" fill="#ffffff"/>
<rect x="956.66" y="105.89" width="2.6" height="2.6" fill="#ffffff" stroke="#ffffff" stroke-width="0.8"/>
<rect x="993.74" y="105.89" width="2.6" height="2.6" fill="#ffffff" stroke="#ffffff" stroke-width="0.8"/>
<rect x="957.8" y="110.4" width="2.4" height="2.4" fill="#ffffff" stroke="#ffffff" stroke-width="0.8"/>
<rect x="992.8" y="110.4" width="2.4" height="2.4" fill="#ffffff" stroke="#ffffff" stroke-width="0.8"/>
<rect x="939.53" y="112" width="2.6" height="2.6" fill="#ffffff" stroke="#ffffff" stroke-width="0.8"/>
<rect x="1010.87" y="112" width="2.6" height="2.6" fill="#ffffff" stroke="#ffffff" stroke-width="0.8"/>
<rect x="941.8" y="116.1" width="2.4" height="2.4" fill="#ffffff" stroke="#ffffff" stroke-width="0.8"/>
<rect x="1008.8" y="116.1" width="2.4" height="2.4" fill="#ffffff" stroke="#ffffff" stroke-width="0.8"/>
<rect x="920.69" y="126.33" width="2.6" height="2.6" fill="#ffffff" stroke="#ffffff" stroke-width="0.8"/>
<rect x="1029.71" y="126.33" width="2.6" height="2.6" fill="#ffffff" stroke="#ffffff" stroke-width="0.8"/>
<rect x="923.4" y="130.1" width="2.4" height="2.4" fill="#ffffff" stroke="#ffffff" stroke-width="0.8"/>
<rect x="1027.2" y="130.1" width="2.4" height="2.4" fill="#ffffff" stroke="#ffffff" stroke-width="0.8"/>
<rect x="905.91" y="136.18" width="2.6" height="2.6" fill="#ffffff" stroke="#ffffff" stroke-width="0.8"/>
<rect x="1044.49" y="136.18" width="2.6" height="2.6" fill="#ffffff" stroke="#ffffff" stroke-width="0.8"/>
<rect x="908.1" y="140.3" width="2.4" height="2.4" fill="#ffffff" stroke="#ffffff" stroke-width="0.8"/>
<rect x="1042.5" y="140.3" width="2.4" height="2.4" fill="#ffffff" stroke="#ffffff" stroke-width="0.8"/>
<rect x="901.64" y="193.2" width="2.4" height="2.4" fill="#ffffff" stroke="#ffffff" stroke-width="0.8"/>
<rect x="1048.96" y="193.2" width="2.4" height="2.4" fill="#ffffff" stroke="#ffffff" stroke-width="0.8"/>
<rect x="899.22" y="196.15" width="2.4" height="2.4" fill="#ffffff" stroke="#ffffff" stroke-width="0.8"/>
<rect x="1051.38" y="196.15" width="2.4" height="2.4" fill="#ffffff" stroke="#ffffff" stroke-width="0.8"/>
<rect x="908.85" y="234.5" width="2.4" height="2.4" fill="#ffffff" stroke="#ffffff" stroke-width="0.8"/>
<rect x="1041.75" y="234.5" width="2.4" height="2.4" fill="#ffffff" stroke="#ffffff" stroke-width="0.8"/>
<rect x="907.49" y="243.02" width="2.4" height="2.4" fill="#ffffff" stroke="#ffffff" stroke-width="0.8"/>
<rect x="1043.11" y="243.02" width="2.4" height="2.4" fill="#ffffff" stroke="#ffffff" stroke-width="0.8"/>
<circle cx="976.5" cy="109.5" r="2.5" fill="#ffffff"/>
<circle cx="976.5" cy="105" r="2.5" fill="#ffffff"/>
<circle cx="976.5" cy="269.3" r="2.5" fill="#f0f070"/>
<circle cx="976.5" cy="265.2" r="2.5" fill="#ffffff"/>
<rect x="969.2" y="104.39" width="2.6" height="2.6" fill="#000" stroke="#ffffff" stroke-width="0.8"/>
<rect x="981.2" y="104.39" width="2.6" height="2.6" fill="#000" stroke="#ffffff" stroke-width="0.8"/>
<rect x="963.74" y="105.04" width="2.6" height="2.6" fill="#000" stroke="#ffffff" stroke-width="0.8"/>
<rect x="986.66" y="105.04" width="2.6" height="2.6" fill="#000" stroke="#ffffff" stroke-width="0.8"/>
<rect x="958.28" y="105.7" width="2.6" height="2.6" fill="#000" stroke="#ffffff" stroke-width="0.8"/>
<rect x="992.12" y="105.7" width="2.6" height="2.6" fill="#000" stroke="#ffffff" stroke-width="0.8"/>
<rect x="953.02" y="107.19" width="2.6" height="2.6" fill="#000" stroke="#ffffff" stroke-width="0.8"/>
<rect x="997.38" y="107.19" width="2.6" height="2.6" fill="#000" stroke="#ffffff" stroke-width="0.8"/>
<rect x="947.84" y="109.04" width="2.6" height="2.6" fill="#000" stroke="#ffffff" stroke-width="0.8"/>
<rect x="1002.56" y="109.04" width="2.6" height="2.6" fill="#000" stroke="#ffffff" stroke-width="0.8"/>
<rect x="942.66" y="110.88" width="2.6" height="2.6" fill="#000" stroke="#ffffff" stroke-width="0.8"/>
<rect x="1007.74" y="110.88" width="2.6" height="2.6" fill="#000" stroke="#ffffff" stroke-width="0.8"/>
<rect x="937.79" y="113.32" width="2.6" height="2.6" fill="#000" stroke="#ffffff" stroke-width="0.8"/>
<rect x="1012.61" y="113.32" width="2.6" height="2.6" fill="#000" stroke="#ffffff" stroke-width="0.8"/>
<rect x="933.42" y="116.65" width="2.6" height="2.6" fill="#000" stroke="#ffffff" stroke-width="0.8"/>
<rect x="1016.98" y="116.65" width="2.6" height="2.6" fill="#000" stroke="#ffffff" stroke-width="0.8"/>
<rect x="929.04" y="119.98" width="2.6" height="2.6" fill="#000" stroke="#ffffff" stroke-width="0.8"/>
<rect x="1021.36" y="119.98" width="2.6" height="2.6" fill="#000" stroke="#ffffff" stroke-width="0.8"/>
<rect x="924.66" y="123.31" width="2.6" height="2.6" fill="#000" stroke="#ffffff" stroke-width="0.8"/>
<rect x="1025.74" y="123.31" width="2.6" height="2.6" fill="#000" stroke="#ffffff" stroke-width="0.8"/>
<rect x="920.27" y="126.61" width="2.6" height="2.6" fill="#000" stroke="#ffffff" stroke-width="0.8"/>
<rect x="1030.13" y="126.61" width="2.6" height="2.6" fill="#000" stroke="#ffffff" stroke-width="0.8"/>
<rect x="915.69" y="129.66" width="2.6" height="2.6" fill="#000" stroke="#ffffff" stroke-width="0.8"/>
<rect x="1034.71" y="129.66" width="2.6" height="2.6" fill="#000" stroke="#ffffff" stroke-width="0.8"/>
<rect x="911.11" y="132.72" width="2.6" height="2.6" fill="#000" stroke="#ffffff" stroke-width="0.8"/>
<rect x="1039.29" y="132.72" width="2.6" height="2.6" fill="#000" stroke="#ffffff" stroke-width="0.8"/>
<rect x="906.54" y="135.77" width="2.6" height="2.6" fill="#000" stroke="#ffffff" stroke-width="0.8"/>
<rect x="1043.86" y="135.77" width="2.6" height="2.6" fill="#000" stroke="#ffffff" stroke-width="0.8"/>
<rect x="966.46" y="109.47" width="2.2" height="2.2" fill="#ffffff" stroke="#ffffff" stroke-width="0.8"/>
<rect x="984.34" y="109.47" width="2.2" height="2.2" fill="#ffffff" stroke="#ffffff" stroke-width="0.8"/>
<rect x="957.55" y="110.63" width="2.2" height="2.2" fill="#ffffff" stroke="#ffffff" stroke-width="0.8"/>
<rect x="993.25" y="110.63" width="2.2" height="2.2" fill="#ffffff" stroke="#ffffff" stroke-width="0.8"/>
<rect x="949.07" y="113.65" width="2.2" height="2.2" fill="#ffffff" stroke="#ffffff" stroke-width="0.8"/>
<rect x="1001.73" y="113.65" width="2.2" height="2.2" fill="#ffffff" stroke="#ffffff" stroke-width="0.8"/>
<rect x="940.79" y="117.04" width="2.2" height="2.2" fill="#ffffff" stroke="#ffffff" stroke-width="0.8"/>
<rect x="1010.01" y="117.04" width="2.2" height="2.2" fill="#ffffff" stroke="#ffffff" stroke-width="0.8"/>
<rect x="933.63" y="122.49" width="2.2" height="2.2" fill="#ffffff" stroke="#ffffff" stroke-width="0.8"/>
<rect x="1017.17" y="122.49" width="2.2" height="2.2" fill="#ffffff" stroke="#ffffff" stroke-width="0.8"/>
<rect x="926.47" y="127.94" width="2.2" height="2.2" fill="#ffffff" stroke="#ffffff" stroke-width="0.8"/>
<rect x="1024.33" y="127.94" width="2.2" height="2.2" fill="#ffffff" stroke="#ffffff" stroke-width="0.8"/>
<rect x="919.12" y="133.12" width="2.2" height="2.2" fill="#ffffff" stroke="#ffffff" stroke-width="0.8"/>
<rect x="1031.68" y="133.12" width="2.2" height="2.2" fill="#ffffff" stroke="#ffffff" stroke-width="0.8"/>
<rect x="911.63" y="138.11" width="2.2" height="2.2" fill="#ffffff" stroke="#ffffff" stroke-width="0.8"/>
<rect x="1039.17" y="138.11" width="2.2" height="2.2" fill="#ffffff" stroke="#ffffff" stroke-width="0.8"/>
<rect x="903.65" y="142.16" width="2.2" height="2.2" fill="#ffffff" stroke="#ffffff" stroke-width="0.8"/>
<rect x="1047.15" y="142.16" width="2.2" height="2.2" fill="#ffffff" stroke="#ffffff" stroke-width="0.8"/>
<rect x="895.26" y="145.42" width="2.2" height="2.2" fill="#ffffff" stroke="#ffffff" stroke-width="0.8"/>
<rect x="1055.54" y="145.42" width="2.2" height="2.2" fill="#ffffff" stroke="#ffffff" stroke-width="0.8"/>
<line x1="976.5" y1="109.5" x2="976.5" y2="273" stroke="#ffffff" stroke-width="1"/>
<line x1="990" y1="111" x2="990" y2="265" stroke="#c8c8c8" stroke-width="1"/>
<path d="M987.62 253.24 L990 265 L992.38 253.24" fill="none" stroke="#c8c8c8" stroke-width="1"/>
<path d="M992.38 122.76 L990 111 L987.62 122.76" fill="none" stroke="#c8c8c8" stroke-width="1"/>
<text x="979.3" y="99.7" fill="#ffffff" font-size="10" text-anchor="middle" dominant-baseline="central" letter-spacing="0.15" font-family="Liberation Sans, sans-serif">2</text>
<rect x="918.5" y="118" width="30" height="12" fill="#000"/>
<text x="933.5" y="124" fill="#ffffff" font-size="10" text-anchor="middle" dominant-baseline="central" letter-spacing="0.15" font-family="Liberation Sans, sans-serif">20.86</text>
<rect x="1004.5" y="118" width="30" height="12" fill="#000"/>
<text x="1019.5" y="124" fill="#ffffff" font-size="10" text-anchor="middle" dominant-baseline="central" letter-spacing="0.15" font-family="Liberation Sans, sans-serif">20.86</text>
<text x="891" y="140" fill="#ffffff" font-size="10" text-anchor="middle" dominant-baseline="central" letter-spacing="0.15" font-family="Liberation Sans, sans-serif">1</text>
<text x="1062" y="140" fill="#ffffff" font-size="10" text-anchor="middle" dominant-baseline="central" letter-spacing="0.15" font-family="Liberation Sans, sans-serif">2</text>
<rect x="964.8" y="141.6" width="23" height="12" fill="#000"/>
<text x="976.3" y="147.6" fill="#ffffff" font-size="10" text-anchor="middle" dominant-baseline="central" letter-spacing="0.15" font-family="Liberation Sans, sans-serif">37.2</text>
<rect x="942.2" y="181.5" width="97" height="12" fill="#000"/>
<text x="990.7" y="187.5" fill="#c8c8c8" font-size="10" text-anchor="middle" dominant-baseline="central" letter-spacing="0.15" font-family="Liberation Sans, sans-serif">PANJANG TANGAN</text>
<rect x="891.5" y="199" width="30" height="12" fill="#000"/>
<text x="906.5" y="205" fill="#ffffff" font-size="10" text-anchor="middle" dominant-baseline="central" letter-spacing="0.15" font-family="Liberation Sans, sans-serif">26.96</text>
<rect x="1031.5" y="199" width="30" height="12" fill="#000"/>
<text x="1046.5" y="205" fill="#ffffff" font-size="10" text-anchor="middle" dominant-baseline="central" letter-spacing="0.15" font-family="Liberation Sans, sans-serif">26.96</text>
<text x="968.5" y="220.5" fill="#ffffff" font-size="10.3" text-anchor="middle" dominant-baseline="central" font-family="Liberation Sans, sans-serif" transform="rotate(90 968.5 220.5)">M,L,XL,XXL</text>
<text x="979.5" y="222" fill="#ffffff" font-size="10.3" text-anchor="middle" dominant-baseline="central" font-family="Liberation Sans, sans-serif" transform="rotate(90 979.5 222)">TANGAN</text>
<text x="990" y="219" fill="#ffffff" font-size="10.3" text-anchor="middle" dominant-baseline="central" font-family="Liberation Sans, sans-serif" transform="rotate(90 990 219)">PB172</text>
<text x="919" y="257" fill="#ffffff" font-size="10" text-anchor="middle" dominant-baseline="central" letter-spacing="0.15" font-family="Liberation Sans, sans-serif">7</text>
<text x="979" y="257" fill="#ffffff" font-size="10" text-anchor="middle" dominant-baseline="central" letter-spacing="0.15" font-family="Liberation Sans, sans-serif">8</text>
<text x="1035" y="257" fill="#ffffff" font-size="10" text-anchor="middle" dominant-baseline="central" letter-spacing="0.15" font-family="Liberation Sans, sans-serif">8</text>
<rect x="935.5" y="259.95" width="23" height="10.5" fill="#000"/>
<text x="947" y="265.2" fill="#ffffff" font-size="10" text-anchor="middle" dominant-baseline="central" letter-spacing="0.15" font-family="Liberation Sans, sans-serif">13.7</text>
<rect x="997.5" y="259.95" width="23" height="10.5" fill="#000"/>
<text x="1009" y="265.2" fill="#ffffff" font-size="10" text-anchor="middle" dominant-baseline="central" letter-spacing="0.15" font-family="Liberation Sans, sans-serif">13.7</text>
<rect x="901" y="267" width="23" height="8" fill="#000"/>
<text x="912.5" y="271" fill="#ffffff" font-size="10" text-anchor="middle" dominant-baseline="central" letter-spacing="0.15" font-family="Liberation Sans, sans-serif">2.76</text>
<rect x="1028" y="267" width="23" height="8" fill="#000"/>
<text x="1039.5" y="271" fill="#ffffff" font-size="10" text-anchor="middle" dominant-baseline="central" letter-spacing="0.15" font-family="Liberation Sans, sans-serif">2.76</text>
<rect x="962.5" y="272.5" width="28" height="10" fill="#000"/>
<text x="976.5" y="277.5" fill="#ffffff" font-size="10" text-anchor="middle" dominant-baseline="central" letter-spacing="0.15" font-family="Liberation Sans, sans-serif">27.94</text>
<text x="986" y="285.5" fill="#ffffff" font-size="10" text-anchor="middle" dominant-baseline="central" letter-spacing="0.15" font-family="Liberation Sans, sans-serif">BS1</text>
<text x="1025" y="285" fill="#ffffff" font-size="10" text-anchor="middle" dominant-baseline="central" letter-spacing="0.15" font-family="Liberation Sans, sans-serif">16</text>
</g>
</g>
</svg>
</body></html>
